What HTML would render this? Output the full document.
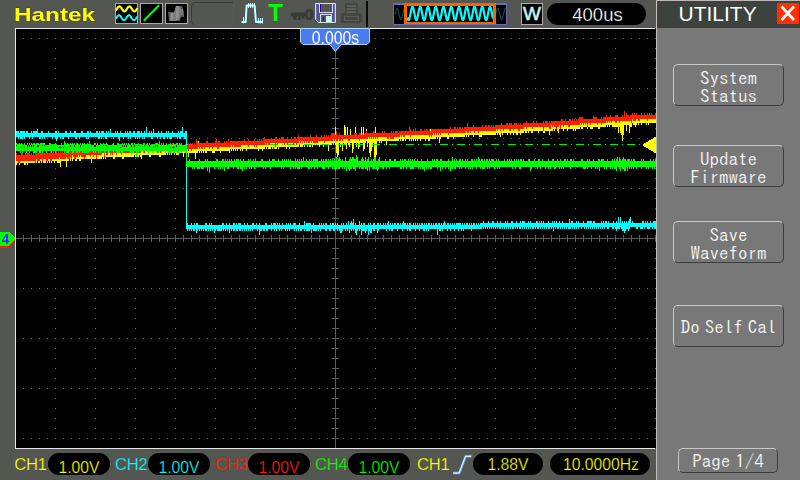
<!DOCTYPE html>
<html><head><meta charset="utf-8"><title>Hantek UTILITY</title>
<style>
html,body{margin:0;padding:0;}
body{width:800px;height:480px;overflow:hidden;background:#545652;position:relative;font-family:"Liberation Sans",sans-serif;}
.abs{position:absolute;white-space:nowrap;line-height:1;}
#g{position:absolute;left:0;top:0;}
.pill{position:absolute;background:#000;border-radius:11px;height:22px;}
.lbl{position:absolute;font-size:16.6px;letter-spacing:-0.2px;-webkit-text-stroke:0.25px #545652;line-height:22px;height:22px;white-space:nowrap;}
.val{position:absolute;font-size:15.7px;-webkit-text-stroke:0.25px #000;line-height:22px;height:22px;white-space:nowrap;text-align:center;}
.y{color:#ffff00}.c{color:#00ffff}.r{color:#ff2000}.gn{color:#00ff00}
#panel{position:absolute;left:657px;top:0;width:143px;height:480px;background:#787878;}
#title{position:absolute;left:657px;top:0;width:143px;height:27.5px;background:#3e423e;border-top:1px solid #bcb8bc;box-sizing:border-box;}
.btn{position:absolute;left:673px;width:111px;box-sizing:border-box;border-radius:5px;border:1px solid;border-color:#c8c8c8 #3c3c3c #3c3c3c #c8c8c8;color:#fff;font-family:"IPAGothic","Liberation Mono",monospace;font-size:19px;word-spacing:-4.5px;-webkit-text-stroke:0.22px #787878;text-align:center;white-space:nowrap;}
</style></head><body>
<div id="panel"></div>
<div id="title"></div>
<svg id="g" width="800" height="480" viewBox="0 0 800 480" shape-rendering="crispEdges">
<rect x="16" y="29" width="640" height="419" fill="#000"/>
<path fill="#6a6a6a" d="M23 38h1v1h-1zM31 38h1v1h-1zM39 38h1v1h-1zM47 38h1v1h-1zM55 38h1v1h-1zM63 38h1v1h-1zM71 38h1v1h-1zM79 38h1v1h-1zM87 38h1v1h-1zM95 38h1v1h-1zM103 38h1v1h-1zM111 38h1v1h-1zM119 38h1v1h-1zM127 38h1v1h-1zM135 38h1v1h-1zM143 38h1v1h-1zM151 38h1v1h-1zM159 38h1v1h-1zM167 38h1v1h-1zM175 38h1v1h-1zM183 38h1v1h-1zM191 38h1v1h-1zM199 38h1v1h-1zM207 38h1v1h-1zM215 38h1v1h-1zM223 38h1v1h-1zM231 38h1v1h-1zM239 38h1v1h-1zM247 38h1v1h-1zM255 38h1v1h-1zM263 38h1v1h-1zM271 38h1v1h-1zM279 38h1v1h-1zM287 38h1v1h-1zM295 38h1v1h-1zM303 38h1v1h-1zM311 38h1v1h-1zM319 38h1v1h-1zM327 38h1v1h-1zM335 38h1v1h-1zM343 38h1v1h-1zM351 38h1v1h-1zM359 38h1v1h-1zM367 38h1v1h-1zM375 38h1v1h-1zM383 38h1v1h-1zM391 38h1v1h-1zM399 38h1v1h-1zM407 38h1v1h-1zM415 38h1v1h-1zM423 38h1v1h-1zM431 38h1v1h-1zM439 38h1v1h-1zM447 38h1v1h-1zM455 38h1v1h-1zM463 38h1v1h-1zM471 38h1v1h-1zM479 38h1v1h-1zM487 38h1v1h-1zM495 38h1v1h-1zM503 38h1v1h-1zM511 38h1v1h-1zM519 38h1v1h-1zM527 38h1v1h-1zM535 38h1v1h-1zM543 38h1v1h-1zM551 38h1v1h-1zM559 38h1v1h-1zM567 38h1v1h-1zM575 38h1v1h-1zM583 38h1v1h-1zM591 38h1v1h-1zM599 38h1v1h-1zM607 38h1v1h-1zM615 38h1v1h-1zM623 38h1v1h-1zM631 38h1v1h-1zM639 38h1v1h-1zM647 38h1v1h-1zM655 38h1v1h-1zM23 88h1v1h-1zM31 88h1v1h-1zM39 88h1v1h-1zM47 88h1v1h-1zM55 88h1v1h-1zM63 88h1v1h-1zM71 88h1v1h-1zM79 88h1v1h-1zM87 88h1v1h-1zM95 88h1v1h-1zM103 88h1v1h-1zM111 88h1v1h-1zM119 88h1v1h-1zM127 88h1v1h-1zM135 88h1v1h-1zM143 88h1v1h-1zM151 88h1v1h-1zM159 88h1v1h-1zM167 88h1v1h-1zM175 88h1v1h-1zM183 88h1v1h-1zM191 88h1v1h-1zM199 88h1v1h-1zM207 88h1v1h-1zM215 88h1v1h-1zM223 88h1v1h-1zM231 88h1v1h-1zM239 88h1v1h-1zM247 88h1v1h-1zM255 88h1v1h-1zM263 88h1v1h-1zM271 88h1v1h-1zM279 88h1v1h-1zM287 88h1v1h-1zM295 88h1v1h-1zM303 88h1v1h-1zM311 88h1v1h-1zM319 88h1v1h-1zM327 88h1v1h-1zM335 88h1v1h-1zM343 88h1v1h-1zM351 88h1v1h-1zM359 88h1v1h-1zM367 88h1v1h-1zM375 88h1v1h-1zM383 88h1v1h-1zM391 88h1v1h-1zM399 88h1v1h-1zM407 88h1v1h-1zM415 88h1v1h-1zM423 88h1v1h-1zM431 88h1v1h-1zM439 88h1v1h-1zM447 88h1v1h-1zM455 88h1v1h-1zM463 88h1v1h-1zM471 88h1v1h-1zM479 88h1v1h-1zM487 88h1v1h-1zM495 88h1v1h-1zM503 88h1v1h-1zM511 88h1v1h-1zM519 88h1v1h-1zM527 88h1v1h-1zM535 88h1v1h-1zM543 88h1v1h-1zM551 88h1v1h-1zM559 88h1v1h-1zM567 88h1v1h-1zM575 88h1v1h-1zM583 88h1v1h-1zM591 88h1v1h-1zM599 88h1v1h-1zM607 88h1v1h-1zM615 88h1v1h-1zM623 88h1v1h-1zM631 88h1v1h-1zM639 88h1v1h-1zM647 88h1v1h-1zM655 88h1v1h-1zM23 138h1v1h-1zM31 138h1v1h-1zM39 138h1v1h-1zM47 138h1v1h-1zM55 138h1v1h-1zM63 138h1v1h-1zM71 138h1v1h-1zM79 138h1v1h-1zM87 138h1v1h-1zM95 138h1v1h-1zM103 138h1v1h-1zM111 138h1v1h-1zM119 138h1v1h-1zM127 138h1v1h-1zM135 138h1v1h-1zM143 138h1v1h-1zM151 138h1v1h-1zM159 138h1v1h-1zM167 138h1v1h-1zM175 138h1v1h-1zM183 138h1v1h-1zM191 138h1v1h-1zM199 138h1v1h-1zM207 138h1v1h-1zM215 138h1v1h-1zM223 138h1v1h-1zM231 138h1v1h-1zM239 138h1v1h-1zM247 138h1v1h-1zM255 138h1v1h-1zM263 138h1v1h-1zM271 138h1v1h-1zM279 138h1v1h-1zM287 138h1v1h-1zM295 138h1v1h-1zM303 138h1v1h-1zM311 138h1v1h-1zM319 138h1v1h-1zM327 138h1v1h-1zM335 138h1v1h-1zM343 138h1v1h-1zM351 138h1v1h-1zM359 138h1v1h-1zM367 138h1v1h-1zM375 138h1v1h-1zM383 138h1v1h-1zM391 138h1v1h-1zM399 138h1v1h-1zM407 138h1v1h-1zM415 138h1v1h-1zM423 138h1v1h-1zM431 138h1v1h-1zM439 138h1v1h-1zM447 138h1v1h-1zM455 138h1v1h-1zM463 138h1v1h-1zM471 138h1v1h-1zM479 138h1v1h-1zM487 138h1v1h-1zM495 138h1v1h-1zM503 138h1v1h-1zM511 138h1v1h-1zM519 138h1v1h-1zM527 138h1v1h-1zM535 138h1v1h-1zM543 138h1v1h-1zM551 138h1v1h-1zM559 138h1v1h-1zM567 138h1v1h-1zM575 138h1v1h-1zM583 138h1v1h-1zM591 138h1v1h-1zM599 138h1v1h-1zM607 138h1v1h-1zM615 138h1v1h-1zM623 138h1v1h-1zM631 138h1v1h-1zM639 138h1v1h-1zM647 138h1v1h-1zM655 138h1v1h-1zM23 188h1v1h-1zM31 188h1v1h-1zM39 188h1v1h-1zM47 188h1v1h-1zM55 188h1v1h-1zM63 188h1v1h-1zM71 188h1v1h-1zM79 188h1v1h-1zM87 188h1v1h-1zM95 188h1v1h-1zM103 188h1v1h-1zM111 188h1v1h-1zM119 188h1v1h-1zM127 188h1v1h-1zM135 188h1v1h-1zM143 188h1v1h-1zM151 188h1v1h-1zM159 188h1v1h-1zM167 188h1v1h-1zM175 188h1v1h-1zM183 188h1v1h-1zM191 188h1v1h-1zM199 188h1v1h-1zM207 188h1v1h-1zM215 188h1v1h-1zM223 188h1v1h-1zM231 188h1v1h-1zM239 188h1v1h-1zM247 188h1v1h-1zM255 188h1v1h-1zM263 188h1v1h-1zM271 188h1v1h-1zM279 188h1v1h-1zM287 188h1v1h-1zM295 188h1v1h-1zM303 188h1v1h-1zM311 188h1v1h-1zM319 188h1v1h-1zM327 188h1v1h-1zM335 188h1v1h-1zM343 188h1v1h-1zM351 188h1v1h-1zM359 188h1v1h-1zM367 188h1v1h-1zM375 188h1v1h-1zM383 188h1v1h-1zM391 188h1v1h-1zM399 188h1v1h-1zM407 188h1v1h-1zM415 188h1v1h-1zM423 188h1v1h-1zM431 188h1v1h-1zM439 188h1v1h-1zM447 188h1v1h-1zM455 188h1v1h-1zM463 188h1v1h-1zM471 188h1v1h-1zM479 188h1v1h-1zM487 188h1v1h-1zM495 188h1v1h-1zM503 188h1v1h-1zM511 188h1v1h-1zM519 188h1v1h-1zM527 188h1v1h-1zM535 188h1v1h-1zM543 188h1v1h-1zM551 188h1v1h-1zM559 188h1v1h-1zM567 188h1v1h-1zM575 188h1v1h-1zM583 188h1v1h-1zM591 188h1v1h-1zM599 188h1v1h-1zM607 188h1v1h-1zM615 188h1v1h-1zM623 188h1v1h-1zM631 188h1v1h-1zM639 188h1v1h-1zM647 188h1v1h-1zM655 188h1v1h-1zM23 288h1v1h-1zM31 288h1v1h-1zM39 288h1v1h-1zM47 288h1v1h-1zM55 288h1v1h-1zM63 288h1v1h-1zM71 288h1v1h-1zM79 288h1v1h-1zM87 288h1v1h-1zM95 288h1v1h-1zM103 288h1v1h-1zM111 288h1v1h-1zM119 288h1v1h-1zM127 288h1v1h-1zM135 288h1v1h-1zM143 288h1v1h-1zM151 288h1v1h-1zM159 288h1v1h-1zM167 288h1v1h-1zM175 288h1v1h-1zM183 288h1v1h-1zM191 288h1v1h-1zM199 288h1v1h-1zM207 288h1v1h-1zM215 288h1v1h-1zM223 288h1v1h-1zM231 288h1v1h-1zM239 288h1v1h-1zM247 288h1v1h-1zM255 288h1v1h-1zM263 288h1v1h-1zM271 288h1v1h-1zM279 288h1v1h-1zM287 288h1v1h-1zM295 288h1v1h-1zM303 288h1v1h-1zM311 288h1v1h-1zM319 288h1v1h-1zM327 288h1v1h-1zM335 288h1v1h-1zM343 288h1v1h-1zM351 288h1v1h-1zM359 288h1v1h-1zM367 288h1v1h-1zM375 288h1v1h-1zM383 288h1v1h-1zM391 288h1v1h-1zM399 288h1v1h-1zM407 288h1v1h-1zM415 288h1v1h-1zM423 288h1v1h-1zM431 288h1v1h-1zM439 288h1v1h-1zM447 288h1v1h-1zM455 288h1v1h-1zM463 288h1v1h-1zM471 288h1v1h-1zM479 288h1v1h-1zM487 288h1v1h-1zM495 288h1v1h-1zM503 288h1v1h-1zM511 288h1v1h-1zM519 288h1v1h-1zM527 288h1v1h-1zM535 288h1v1h-1zM543 288h1v1h-1zM551 288h1v1h-1zM559 288h1v1h-1zM567 288h1v1h-1zM575 288h1v1h-1zM583 288h1v1h-1zM591 288h1v1h-1zM599 288h1v1h-1zM607 288h1v1h-1zM615 288h1v1h-1zM623 288h1v1h-1zM631 288h1v1h-1zM639 288h1v1h-1zM647 288h1v1h-1zM655 288h1v1h-1zM23 338h1v1h-1zM31 338h1v1h-1zM39 338h1v1h-1zM47 338h1v1h-1zM55 338h1v1h-1zM63 338h1v1h-1zM71 338h1v1h-1zM79 338h1v1h-1zM87 338h1v1h-1zM95 338h1v1h-1zM103 338h1v1h-1zM111 338h1v1h-1zM119 338h1v1h-1zM127 338h1v1h-1zM135 338h1v1h-1zM143 338h1v1h-1zM151 338h1v1h-1zM159 338h1v1h-1zM167 338h1v1h-1zM175 338h1v1h-1zM183 338h1v1h-1zM191 338h1v1h-1zM199 338h1v1h-1zM207 338h1v1h-1zM215 338h1v1h-1zM223 338h1v1h-1zM231 338h1v1h-1zM239 338h1v1h-1zM247 338h1v1h-1zM255 338h1v1h-1zM263 338h1v1h-1zM271 338h1v1h-1zM279 338h1v1h-1zM287 338h1v1h-1zM295 338h1v1h-1zM303 338h1v1h-1zM311 338h1v1h-1zM319 338h1v1h-1zM327 338h1v1h-1zM335 338h1v1h-1zM343 338h1v1h-1zM351 338h1v1h-1zM359 338h1v1h-1zM367 338h1v1h-1zM375 338h1v1h-1zM383 338h1v1h-1zM391 338h1v1h-1zM399 338h1v1h-1zM407 338h1v1h-1zM415 338h1v1h-1zM423 338h1v1h-1zM431 338h1v1h-1zM439 338h1v1h-1zM447 338h1v1h-1zM455 338h1v1h-1zM463 338h1v1h-1zM471 338h1v1h-1zM479 338h1v1h-1zM487 338h1v1h-1zM495 338h1v1h-1zM503 338h1v1h-1zM511 338h1v1h-1zM519 338h1v1h-1zM527 338h1v1h-1zM535 338h1v1h-1zM543 338h1v1h-1zM551 338h1v1h-1zM559 338h1v1h-1zM567 338h1v1h-1zM575 338h1v1h-1zM583 338h1v1h-1zM591 338h1v1h-1zM599 338h1v1h-1zM607 338h1v1h-1zM615 338h1v1h-1zM623 338h1v1h-1zM631 338h1v1h-1zM639 338h1v1h-1zM647 338h1v1h-1zM655 338h1v1h-1zM23 388h1v1h-1zM31 388h1v1h-1zM39 388h1v1h-1zM47 388h1v1h-1zM55 388h1v1h-1zM63 388h1v1h-1zM71 388h1v1h-1zM79 388h1v1h-1zM87 388h1v1h-1zM95 388h1v1h-1zM103 388h1v1h-1zM111 388h1v1h-1zM119 388h1v1h-1zM127 388h1v1h-1zM135 388h1v1h-1zM143 388h1v1h-1zM151 388h1v1h-1zM159 388h1v1h-1zM167 388h1v1h-1zM175 388h1v1h-1zM183 388h1v1h-1zM191 388h1v1h-1zM199 388h1v1h-1zM207 388h1v1h-1zM215 388h1v1h-1zM223 388h1v1h-1zM231 388h1v1h-1zM239 388h1v1h-1zM247 388h1v1h-1zM255 388h1v1h-1zM263 388h1v1h-1zM271 388h1v1h-1zM279 388h1v1h-1zM287 388h1v1h-1zM295 388h1v1h-1zM303 388h1v1h-1zM311 388h1v1h-1zM319 388h1v1h-1zM327 388h1v1h-1zM335 388h1v1h-1zM343 388h1v1h-1zM351 388h1v1h-1zM359 388h1v1h-1zM367 388h1v1h-1zM375 388h1v1h-1zM383 388h1v1h-1zM391 388h1v1h-1zM399 388h1v1h-1zM407 388h1v1h-1zM415 388h1v1h-1zM423 388h1v1h-1zM431 388h1v1h-1zM439 388h1v1h-1zM447 388h1v1h-1zM455 388h1v1h-1zM463 388h1v1h-1zM471 388h1v1h-1zM479 388h1v1h-1zM487 388h1v1h-1zM495 388h1v1h-1zM503 388h1v1h-1zM511 388h1v1h-1zM519 388h1v1h-1zM527 388h1v1h-1zM535 388h1v1h-1zM543 388h1v1h-1zM551 388h1v1h-1zM559 388h1v1h-1zM567 388h1v1h-1zM575 388h1v1h-1zM583 388h1v1h-1zM591 388h1v1h-1zM599 388h1v1h-1zM607 388h1v1h-1zM615 388h1v1h-1zM623 388h1v1h-1zM631 388h1v1h-1zM639 388h1v1h-1zM647 388h1v1h-1zM655 388h1v1h-1zM23 438h1v1h-1zM31 438h1v1h-1zM39 438h1v1h-1zM47 438h1v1h-1zM55 438h1v1h-1zM63 438h1v1h-1zM71 438h1v1h-1zM79 438h1v1h-1zM87 438h1v1h-1zM95 438h1v1h-1zM103 438h1v1h-1zM111 438h1v1h-1zM119 438h1v1h-1zM127 438h1v1h-1zM135 438h1v1h-1zM143 438h1v1h-1zM151 438h1v1h-1zM159 438h1v1h-1zM167 438h1v1h-1zM175 438h1v1h-1zM183 438h1v1h-1zM191 438h1v1h-1zM199 438h1v1h-1zM207 438h1v1h-1zM215 438h1v1h-1zM223 438h1v1h-1zM231 438h1v1h-1zM239 438h1v1h-1zM247 438h1v1h-1zM255 438h1v1h-1zM263 438h1v1h-1zM271 438h1v1h-1zM279 438h1v1h-1zM287 438h1v1h-1zM295 438h1v1h-1zM303 438h1v1h-1zM311 438h1v1h-1zM319 438h1v1h-1zM327 438h1v1h-1zM335 438h1v1h-1zM343 438h1v1h-1zM351 438h1v1h-1zM359 438h1v1h-1zM367 438h1v1h-1zM375 438h1v1h-1zM383 438h1v1h-1zM391 438h1v1h-1zM399 438h1v1h-1zM407 438h1v1h-1zM415 438h1v1h-1zM423 438h1v1h-1zM431 438h1v1h-1zM439 438h1v1h-1zM447 438h1v1h-1zM455 438h1v1h-1zM463 438h1v1h-1zM471 438h1v1h-1zM479 438h1v1h-1zM487 438h1v1h-1zM495 438h1v1h-1zM503 438h1v1h-1zM511 438h1v1h-1zM519 438h1v1h-1zM527 438h1v1h-1zM535 438h1v1h-1zM543 438h1v1h-1zM551 438h1v1h-1zM559 438h1v1h-1zM567 438h1v1h-1zM575 438h1v1h-1zM583 438h1v1h-1zM591 438h1v1h-1zM599 438h1v1h-1zM607 438h1v1h-1zM615 438h1v1h-1zM623 438h1v1h-1zM631 438h1v1h-1zM639 438h1v1h-1zM647 438h1v1h-1zM655 438h1v1h-1zM55 48h1v1h-1zM55 58h1v1h-1zM55 68h1v1h-1zM55 78h1v1h-1zM55 98h1v1h-1zM55 108h1v1h-1zM55 118h1v1h-1zM55 128h1v1h-1zM55 148h1v1h-1zM55 158h1v1h-1zM55 168h1v1h-1zM55 178h1v1h-1zM55 198h1v1h-1zM55 208h1v1h-1zM55 218h1v1h-1zM55 228h1v1h-1zM55 238h1v1h-1zM55 248h1v1h-1zM55 258h1v1h-1zM55 268h1v1h-1zM55 278h1v1h-1zM55 298h1v1h-1zM55 308h1v1h-1zM55 318h1v1h-1zM55 328h1v1h-1zM55 348h1v1h-1zM55 358h1v1h-1zM55 368h1v1h-1zM55 378h1v1h-1zM55 398h1v1h-1zM55 408h1v1h-1zM55 418h1v1h-1zM55 428h1v1h-1zM95 48h1v1h-1zM95 58h1v1h-1zM95 68h1v1h-1zM95 78h1v1h-1zM95 98h1v1h-1zM95 108h1v1h-1zM95 118h1v1h-1zM95 128h1v1h-1zM95 148h1v1h-1zM95 158h1v1h-1zM95 168h1v1h-1zM95 178h1v1h-1zM95 198h1v1h-1zM95 208h1v1h-1zM95 218h1v1h-1zM95 228h1v1h-1zM95 238h1v1h-1zM95 248h1v1h-1zM95 258h1v1h-1zM95 268h1v1h-1zM95 278h1v1h-1zM95 298h1v1h-1zM95 308h1v1h-1zM95 318h1v1h-1zM95 328h1v1h-1zM95 348h1v1h-1zM95 358h1v1h-1zM95 368h1v1h-1zM95 378h1v1h-1zM95 398h1v1h-1zM95 408h1v1h-1zM95 418h1v1h-1zM95 428h1v1h-1zM135 48h1v1h-1zM135 58h1v1h-1zM135 68h1v1h-1zM135 78h1v1h-1zM135 98h1v1h-1zM135 108h1v1h-1zM135 118h1v1h-1zM135 128h1v1h-1zM135 148h1v1h-1zM135 158h1v1h-1zM135 168h1v1h-1zM135 178h1v1h-1zM135 198h1v1h-1zM135 208h1v1h-1zM135 218h1v1h-1zM135 228h1v1h-1zM135 238h1v1h-1zM135 248h1v1h-1zM135 258h1v1h-1zM135 268h1v1h-1zM135 278h1v1h-1zM135 298h1v1h-1zM135 308h1v1h-1zM135 318h1v1h-1zM135 328h1v1h-1zM135 348h1v1h-1zM135 358h1v1h-1zM135 368h1v1h-1zM135 378h1v1h-1zM135 398h1v1h-1zM135 408h1v1h-1zM135 418h1v1h-1zM135 428h1v1h-1zM175 48h1v1h-1zM175 58h1v1h-1zM175 68h1v1h-1zM175 78h1v1h-1zM175 98h1v1h-1zM175 108h1v1h-1zM175 118h1v1h-1zM175 128h1v1h-1zM175 148h1v1h-1zM175 158h1v1h-1zM175 168h1v1h-1zM175 178h1v1h-1zM175 198h1v1h-1zM175 208h1v1h-1zM175 218h1v1h-1zM175 228h1v1h-1zM175 238h1v1h-1zM175 248h1v1h-1zM175 258h1v1h-1zM175 268h1v1h-1zM175 278h1v1h-1zM175 298h1v1h-1zM175 308h1v1h-1zM175 318h1v1h-1zM175 328h1v1h-1zM175 348h1v1h-1zM175 358h1v1h-1zM175 368h1v1h-1zM175 378h1v1h-1zM175 398h1v1h-1zM175 408h1v1h-1zM175 418h1v1h-1zM175 428h1v1h-1zM215 48h1v1h-1zM215 58h1v1h-1zM215 68h1v1h-1zM215 78h1v1h-1zM215 98h1v1h-1zM215 108h1v1h-1zM215 118h1v1h-1zM215 128h1v1h-1zM215 148h1v1h-1zM215 158h1v1h-1zM215 168h1v1h-1zM215 178h1v1h-1zM215 198h1v1h-1zM215 208h1v1h-1zM215 218h1v1h-1zM215 228h1v1h-1zM215 238h1v1h-1zM215 248h1v1h-1zM215 258h1v1h-1zM215 268h1v1h-1zM215 278h1v1h-1zM215 298h1v1h-1zM215 308h1v1h-1zM215 318h1v1h-1zM215 328h1v1h-1zM215 348h1v1h-1zM215 358h1v1h-1zM215 368h1v1h-1zM215 378h1v1h-1zM215 398h1v1h-1zM215 408h1v1h-1zM215 418h1v1h-1zM215 428h1v1h-1zM255 48h1v1h-1zM255 58h1v1h-1zM255 68h1v1h-1zM255 78h1v1h-1zM255 98h1v1h-1zM255 108h1v1h-1zM255 118h1v1h-1zM255 128h1v1h-1zM255 148h1v1h-1zM255 158h1v1h-1zM255 168h1v1h-1zM255 178h1v1h-1zM255 198h1v1h-1zM255 208h1v1h-1zM255 218h1v1h-1zM255 228h1v1h-1zM255 238h1v1h-1zM255 248h1v1h-1zM255 258h1v1h-1zM255 268h1v1h-1zM255 278h1v1h-1zM255 298h1v1h-1zM255 308h1v1h-1zM255 318h1v1h-1zM255 328h1v1h-1zM255 348h1v1h-1zM255 358h1v1h-1zM255 368h1v1h-1zM255 378h1v1h-1zM255 398h1v1h-1zM255 408h1v1h-1zM255 418h1v1h-1zM255 428h1v1h-1zM295 48h1v1h-1zM295 58h1v1h-1zM295 68h1v1h-1zM295 78h1v1h-1zM295 98h1v1h-1zM295 108h1v1h-1zM295 118h1v1h-1zM295 128h1v1h-1zM295 148h1v1h-1zM295 158h1v1h-1zM295 168h1v1h-1zM295 178h1v1h-1zM295 198h1v1h-1zM295 208h1v1h-1zM295 218h1v1h-1zM295 228h1v1h-1zM295 238h1v1h-1zM295 248h1v1h-1zM295 258h1v1h-1zM295 268h1v1h-1zM295 278h1v1h-1zM295 298h1v1h-1zM295 308h1v1h-1zM295 318h1v1h-1zM295 328h1v1h-1zM295 348h1v1h-1zM295 358h1v1h-1zM295 368h1v1h-1zM295 378h1v1h-1zM295 398h1v1h-1zM295 408h1v1h-1zM295 418h1v1h-1zM295 428h1v1h-1zM375 48h1v1h-1zM375 58h1v1h-1zM375 68h1v1h-1zM375 78h1v1h-1zM375 98h1v1h-1zM375 108h1v1h-1zM375 118h1v1h-1zM375 128h1v1h-1zM375 148h1v1h-1zM375 158h1v1h-1zM375 168h1v1h-1zM375 178h1v1h-1zM375 198h1v1h-1zM375 208h1v1h-1zM375 218h1v1h-1zM375 228h1v1h-1zM375 238h1v1h-1zM375 248h1v1h-1zM375 258h1v1h-1zM375 268h1v1h-1zM375 278h1v1h-1zM375 298h1v1h-1zM375 308h1v1h-1zM375 318h1v1h-1zM375 328h1v1h-1zM375 348h1v1h-1zM375 358h1v1h-1zM375 368h1v1h-1zM375 378h1v1h-1zM375 398h1v1h-1zM375 408h1v1h-1zM375 418h1v1h-1zM375 428h1v1h-1zM415 48h1v1h-1zM415 58h1v1h-1zM415 68h1v1h-1zM415 78h1v1h-1zM415 98h1v1h-1zM415 108h1v1h-1zM415 118h1v1h-1zM415 128h1v1h-1zM415 148h1v1h-1zM415 158h1v1h-1zM415 168h1v1h-1zM415 178h1v1h-1zM415 198h1v1h-1zM415 208h1v1h-1zM415 218h1v1h-1zM415 228h1v1h-1zM415 238h1v1h-1zM415 248h1v1h-1zM415 258h1v1h-1zM415 268h1v1h-1zM415 278h1v1h-1zM415 298h1v1h-1zM415 308h1v1h-1zM415 318h1v1h-1zM415 328h1v1h-1zM415 348h1v1h-1zM415 358h1v1h-1zM415 368h1v1h-1zM415 378h1v1h-1zM415 398h1v1h-1zM415 408h1v1h-1zM415 418h1v1h-1zM415 428h1v1h-1zM455 48h1v1h-1zM455 58h1v1h-1zM455 68h1v1h-1zM455 78h1v1h-1zM455 98h1v1h-1zM455 108h1v1h-1zM455 118h1v1h-1zM455 128h1v1h-1zM455 148h1v1h-1zM455 158h1v1h-1zM455 168h1v1h-1zM455 178h1v1h-1zM455 198h1v1h-1zM455 208h1v1h-1zM455 218h1v1h-1zM455 228h1v1h-1zM455 238h1v1h-1zM455 248h1v1h-1zM455 258h1v1h-1zM455 268h1v1h-1zM455 278h1v1h-1zM455 298h1v1h-1zM455 308h1v1h-1zM455 318h1v1h-1zM455 328h1v1h-1zM455 348h1v1h-1zM455 358h1v1h-1zM455 368h1v1h-1zM455 378h1v1h-1zM455 398h1v1h-1zM455 408h1v1h-1zM455 418h1v1h-1zM455 428h1v1h-1zM495 48h1v1h-1zM495 58h1v1h-1zM495 68h1v1h-1zM495 78h1v1h-1zM495 98h1v1h-1zM495 108h1v1h-1zM495 118h1v1h-1zM495 128h1v1h-1zM495 148h1v1h-1zM495 158h1v1h-1zM495 168h1v1h-1zM495 178h1v1h-1zM495 198h1v1h-1zM495 208h1v1h-1zM495 218h1v1h-1zM495 228h1v1h-1zM495 238h1v1h-1zM495 248h1v1h-1zM495 258h1v1h-1zM495 268h1v1h-1zM495 278h1v1h-1zM495 298h1v1h-1zM495 308h1v1h-1zM495 318h1v1h-1zM495 328h1v1h-1zM495 348h1v1h-1zM495 358h1v1h-1zM495 368h1v1h-1zM495 378h1v1h-1zM495 398h1v1h-1zM495 408h1v1h-1zM495 418h1v1h-1zM495 428h1v1h-1zM535 48h1v1h-1zM535 58h1v1h-1zM535 68h1v1h-1zM535 78h1v1h-1zM535 98h1v1h-1zM535 108h1v1h-1zM535 118h1v1h-1zM535 128h1v1h-1zM535 148h1v1h-1zM535 158h1v1h-1zM535 168h1v1h-1zM535 178h1v1h-1zM535 198h1v1h-1zM535 208h1v1h-1zM535 218h1v1h-1zM535 228h1v1h-1zM535 238h1v1h-1zM535 248h1v1h-1zM535 258h1v1h-1zM535 268h1v1h-1zM535 278h1v1h-1zM535 298h1v1h-1zM535 308h1v1h-1zM535 318h1v1h-1zM535 328h1v1h-1zM535 348h1v1h-1zM535 358h1v1h-1zM535 368h1v1h-1zM535 378h1v1h-1zM535 398h1v1h-1zM535 408h1v1h-1zM535 418h1v1h-1zM535 428h1v1h-1zM575 48h1v1h-1zM575 58h1v1h-1zM575 68h1v1h-1zM575 78h1v1h-1zM575 98h1v1h-1zM575 108h1v1h-1zM575 118h1v1h-1zM575 128h1v1h-1zM575 148h1v1h-1zM575 158h1v1h-1zM575 168h1v1h-1zM575 178h1v1h-1zM575 198h1v1h-1zM575 208h1v1h-1zM575 218h1v1h-1zM575 228h1v1h-1zM575 238h1v1h-1zM575 248h1v1h-1zM575 258h1v1h-1zM575 268h1v1h-1zM575 278h1v1h-1zM575 298h1v1h-1zM575 308h1v1h-1zM575 318h1v1h-1zM575 328h1v1h-1zM575 348h1v1h-1zM575 358h1v1h-1zM575 368h1v1h-1zM575 378h1v1h-1zM575 398h1v1h-1zM575 408h1v1h-1zM575 418h1v1h-1zM575 428h1v1h-1zM615 48h1v1h-1zM615 58h1v1h-1zM615 68h1v1h-1zM615 78h1v1h-1zM615 98h1v1h-1zM615 108h1v1h-1zM615 118h1v1h-1zM615 128h1v1h-1zM615 148h1v1h-1zM615 158h1v1h-1zM615 168h1v1h-1zM615 178h1v1h-1zM615 198h1v1h-1zM615 208h1v1h-1zM615 218h1v1h-1zM615 228h1v1h-1zM615 238h1v1h-1zM615 248h1v1h-1zM615 258h1v1h-1zM615 268h1v1h-1zM615 278h1v1h-1zM615 298h1v1h-1zM615 308h1v1h-1zM615 318h1v1h-1zM615 328h1v1h-1zM615 348h1v1h-1zM615 358h1v1h-1zM615 368h1v1h-1zM615 378h1v1h-1zM615 398h1v1h-1zM615 408h1v1h-1zM615 418h1v1h-1zM615 428h1v1h-1zM655 48h1v1h-1zM655 58h1v1h-1zM655 68h1v1h-1zM655 78h1v1h-1zM655 98h1v1h-1zM655 108h1v1h-1zM655 118h1v1h-1zM655 128h1v1h-1zM655 148h1v1h-1zM655 158h1v1h-1zM655 168h1v1h-1zM655 178h1v1h-1zM655 198h1v1h-1zM655 208h1v1h-1zM655 218h1v1h-1zM655 228h1v1h-1zM655 238h1v1h-1zM655 248h1v1h-1zM655 258h1v1h-1zM655 268h1v1h-1zM655 278h1v1h-1zM655 298h1v1h-1zM655 308h1v1h-1zM655 318h1v1h-1zM655 328h1v1h-1zM655 348h1v1h-1zM655 358h1v1h-1zM655 368h1v1h-1zM655 378h1v1h-1zM655 398h1v1h-1zM655 408h1v1h-1zM655 418h1v1h-1zM655 428h1v1h-1z"/>
<path fill="#5c5c5c" d="M16 238h640v1h-640zM23 235h1v7h-1zM31 235h1v7h-1zM39 235h1v7h-1zM47 235h1v7h-1zM55 235h1v7h-1zM63 235h1v7h-1zM71 235h1v7h-1zM79 235h1v7h-1zM87 235h1v7h-1zM95 235h1v7h-1zM103 235h1v7h-1zM111 235h1v7h-1zM119 235h1v7h-1zM127 235h1v7h-1zM135 235h1v7h-1zM143 235h1v7h-1zM151 235h1v7h-1zM159 235h1v7h-1zM167 235h1v7h-1zM175 235h1v7h-1zM183 235h1v7h-1zM191 235h1v7h-1zM199 235h1v7h-1zM207 235h1v7h-1zM215 235h1v7h-1zM223 235h1v7h-1zM231 235h1v7h-1zM239 235h1v7h-1zM247 235h1v7h-1zM255 235h1v7h-1zM263 235h1v7h-1zM271 235h1v7h-1zM279 235h1v7h-1zM287 235h1v7h-1zM295 235h1v7h-1zM303 235h1v7h-1zM311 235h1v7h-1zM319 235h1v7h-1zM327 235h1v7h-1zM335 235h1v7h-1zM343 235h1v7h-1zM351 235h1v7h-1zM359 235h1v7h-1zM367 235h1v7h-1zM375 235h1v7h-1zM383 235h1v7h-1zM391 235h1v7h-1zM399 235h1v7h-1zM407 235h1v7h-1zM415 235h1v7h-1zM423 235h1v7h-1zM431 235h1v7h-1zM439 235h1v7h-1zM447 235h1v7h-1zM455 235h1v7h-1zM463 235h1v7h-1zM471 235h1v7h-1zM479 235h1v7h-1zM487 235h1v7h-1zM495 235h1v7h-1zM503 235h1v7h-1zM511 235h1v7h-1zM519 235h1v7h-1zM527 235h1v7h-1zM535 235h1v7h-1zM543 235h1v7h-1zM551 235h1v7h-1zM559 235h1v7h-1zM567 235h1v7h-1zM575 235h1v7h-1zM583 235h1v7h-1zM591 235h1v7h-1zM599 235h1v7h-1zM607 235h1v7h-1zM615 235h1v7h-1zM623 235h1v7h-1zM631 235h1v7h-1zM639 235h1v7h-1zM647 235h1v7h-1zM655 235h1v7h-1zM335 29h1v419h-1zM332 38h7v1h-7zM332 48h7v1h-7zM332 58h7v1h-7zM332 68h7v1h-7zM332 78h7v1h-7zM332 88h7v1h-7zM332 98h7v1h-7zM332 108h7v1h-7zM332 118h7v1h-7zM332 128h7v1h-7zM332 138h7v1h-7zM332 148h7v1h-7zM332 158h7v1h-7zM332 168h7v1h-7zM332 178h7v1h-7zM332 188h7v1h-7zM332 198h7v1h-7zM332 208h7v1h-7zM332 218h7v1h-7zM332 228h7v1h-7zM332 238h7v1h-7zM332 248h7v1h-7zM332 258h7v1h-7zM332 268h7v1h-7zM332 278h7v1h-7zM332 288h7v1h-7zM332 298h7v1h-7zM332 308h7v1h-7zM332 318h7v1h-7zM332 328h7v1h-7zM332 338h7v1h-7zM332 348h7v1h-7zM332 358h7v1h-7zM332 368h7v1h-7zM332 378h7v1h-7zM332 388h7v1h-7zM332 398h7v1h-7zM332 408h7v1h-7zM332 418h7v1h-7zM332 428h7v1h-7zM332 438h7v1h-7z"/>
<path fill="#ffff00" d="M16 157h1v8h-1zM17 155h2v8h-2zM19 157h1v8h-1zM20 157h1v6h-1zM21 155h1v8h-1zM22 157h1v6h-1zM23 155h1v8h-1zM24 155h1v10h-1zM25 157h1v8h-1zM26 157h1v6h-1zM27 155h1v10h-1zM28 157h1v6h-1zM29 155h1v8h-1zM30 157h1v6h-1zM31 155h1v8h-1zM32 157h1v6h-1zM33 155h2v8h-2zM35 157h1v6h-1zM36 155h1v8h-1zM37 155h1v6h-1zM38 155h2v8h-2zM40 155h1v6h-1zM41 155h1v8h-1zM42 153h1v8h-1zM43 153h2v10h-2zM45 155h1v8h-1zM46 155h1v6h-1zM47 155h1v8h-1zM48 155h1v6h-1zM49 153h1v10h-1zM50 153h1v8h-1zM51 153h1v10h-1zM52 155h2v6h-2zM54 155h1v8h-1zM55 155h2v6h-2zM57 155h1v8h-1zM58 153h2v10h-2zM60 153h1v14h-1zM61 155h1v6h-1zM62 153h2v8h-2zM64 155h1v6h-1zM65 153h1v8h-1zM66 155h1v12h-1zM67 155h1v6h-1zM68 153h1v8h-1zM69 153h1v6h-1zM70 153h1v8h-1zM71 153h1v6h-1zM72 153h1v8h-1zM73 153h2v6h-2zM75 153h1v8h-1zM76 151h1v10h-1zM77 153h2v6h-2zM79 153h2v8h-2zM81 153h7v6h-7zM88 151h1v8h-1zM89 153h2v6h-2zM91 153h1v10h-1zM92 153h2v6h-2zM94 151h3v8h-3zM97 153h1v6h-1zM98 151h1v8h-1zM99 153h1v6h-1zM100 151h2v8h-2zM102 151h1v6h-1zM103 151h1v8h-1zM104 151h1v6h-1zM105 151h1v8h-1zM106 151h7v6h-7zM113 149h2v10h-2zM115 151h1v6h-1zM116 149h3v8h-3zM119 151h1v6h-1zM120 149h1v8h-1zM121 151h1v6h-1zM122 151h1v8h-1zM123 149h1v10h-1zM124 151h2v6h-2zM126 149h1v8h-1zM127 151h1v6h-1zM128 149h2v8h-2zM130 151h1v6h-1zM131 149h1v8h-1zM132 147h1v10h-1zM133 149h1v8h-1zM134 147h1v8h-1zM135 149h3v8h-3zM138 147h1v10h-1zM139 149h1v6h-1zM140 149h1v8h-1zM141 147h1v12h-1zM142 149h7v6h-7zM149 147h2v10h-2zM151 149h1v6h-1zM152 147h1v8h-1zM153 149h1v6h-1zM154 147h1v8h-1zM155 149h1v6h-1zM156 145h1v10h-1zM157 149h1v6h-1zM158 145h1v10h-1zM159 147h2v10h-2zM161 147h1v8h-1zM162 149h1v6h-1zM163 147h3v8h-3zM166 147h1v6h-1zM167 147h1v8h-1zM168 147h1v6h-1zM169 147h1v8h-1zM170 147h1v6h-1zM171 145h1v10h-1zM172 145h1v8h-1zM173 147h1v6h-1zM174 147h1v8h-1zM175 147h1v6h-1zM176 147h3v8h-3zM179 147h3v6h-3zM182 145h1v8h-1zM183 147h1v10h-1zM184 145h1v8h-1zM185 147h2v6h-2zM187 145h1v8h-1zM188 147h1v10h-1zM189 145h1v8h-1zM190 147h1v6h-1zM191 145h3v8h-3zM194 147h1v6h-1zM195 145h1v14h-1zM196 145h2v8h-2zM198 141h1v10h-1zM199 145h1v8h-1zM200 145h1v6h-1zM201 145h1v8h-1zM202 145h1v6h-1zM203 145h1v8h-1zM204 143h1v8h-1zM205 145h2v8h-2zM207 145h5v6h-5zM212 145h3v8h-3zM215 145h1v6h-1zM216 143h1v8h-1zM217 145h2v6h-2zM219 143h1v8h-1zM220 145h1v8h-1zM221 143h1v8h-1zM222 145h1v6h-1zM223 143h3v8h-3zM226 145h1v6h-1zM227 143h1v8h-1zM228 145h1v6h-1zM229 143h1v10h-1zM230 143h1v6h-1zM231 141h1v10h-1zM232 143h1v6h-1zM233 143h1v8h-1zM234 143h1v6h-1zM235 143h1v8h-1zM236 143h1v6h-1zM237 143h1v8h-1zM238 143h2v6h-2zM240 141h1v10h-1zM241 143h1v6h-1zM242 143h1v8h-1zM243 143h3v6h-3zM246 143h1v8h-1zM247 143h2v6h-2zM249 141h1v8h-1zM250 143h3v6h-3zM253 141h3v8h-3zM256 143h1v6h-1zM257 141h1v8h-1zM258 141h1v10h-1zM259 143h1v6h-1zM260 141h1v8h-1zM261 143h1v6h-1zM262 141h1v10h-1zM263 143h1v6h-1zM264 141h1v8h-1zM265 141h1v6h-1zM266 141h1v8h-1zM267 141h1v6h-1zM268 139h1v10h-1zM269 141h2v8h-2zM271 141h1v6h-1zM272 139h1v10h-1zM273 139h1v8h-1zM274 141h2v8h-2zM276 137h1v12h-1zM277 141h1v6h-1zM278 141h1v8h-1zM279 141h6v6h-6zM285 139h1v8h-1zM286 139h1v10h-1zM287 141h2v6h-2zM289 139h1v10h-1zM290 141h1v6h-1zM291 139h1v8h-1zM292 141h1v6h-1zM293 139h1v8h-1zM294 141h1v6h-1zM295 139h2v8h-2zM297 141h1v6h-1zM298 139h1v8h-1zM299 139h1v6h-1zM300 139h3v8h-3zM303 139h1v6h-1zM304 139h1v8h-1zM305 139h2v6h-2zM307 139h1v8h-1zM308 139h1v6h-1zM309 139h2v8h-2zM311 139h1v6h-1zM312 137h1v10h-1zM313 139h1v6h-1zM314 137h2v8h-2zM316 139h3v6h-3zM319 137h1v10h-1zM320 139h2v6h-2zM322 137h1v8h-1zM323 139h1v8h-1zM324 137h3v8h-3zM327 139h1v6h-1zM328 137h1v14h-1zM329 137h1v8h-1zM330 139h1v6h-1zM331 137h1v8h-1zM332 137h1v6h-1zM333 137h1v8h-1zM334 137h1v6h-1zM335 127h1v18h-1zM336 135h1v18h-1zM337 135h1v22h-1zM338 137h1v18h-1zM339 137h1v6h-1zM340 137h1v10h-1zM341 137h1v8h-1zM342 137h1v14h-1zM343 137h1v6h-1zM344 125h1v20h-1zM345 127h1v18h-1zM346 137h1v12h-1zM347 127h1v16h-1zM348 137h1v8h-1zM349 137h1v10h-1zM350 129h1v14h-1zM351 137h1v6h-1zM352 137h1v16h-1zM353 135h1v14h-1zM354 135h1v8h-1zM355 127h1v16h-1zM356 137h1v10h-1zM357 137h1v6h-1zM358 135h1v14h-1zM359 135h1v12h-1zM360 137h1v6h-1zM361 127h1v16h-1zM362 137h1v6h-1zM363 127h1v24h-1zM364 135h1v14h-1zM365 135h1v8h-1zM366 129h1v12h-1zM367 135h1v12h-1zM368 135h1v8h-1zM369 135h1v18h-1zM370 135h1v22h-1zM371 133h1v18h-1zM372 135h1v12h-1zM373 135h1v8h-1zM374 131h1v26h-1zM375 127h1v32h-1zM376 135h1v20h-1zM377 135h1v6h-1zM378 133h1v8h-1zM379 133h1v10h-1zM380 135h1v6h-1zM381 135h1v8h-1zM382 135h2v6h-2zM384 133h1v8h-1zM385 135h1v6h-1zM386 133h1v12h-1zM387 135h1v6h-1zM388 133h1v8h-1zM389 135h1v6h-1zM390 133h1v8h-1zM391 135h1v6h-1zM392 133h1v8h-1zM393 135h1v6h-1zM394 133h2v8h-2zM396 135h1v6h-1zM397 133h1v8h-1zM398 135h1v6h-1zM399 133h1v6h-1zM400 133h1v8h-1zM401 133h1v6h-1zM402 133h2v8h-2zM404 133h1v6h-1zM405 133h1v8h-1zM406 133h3v6h-3zM409 133h1v8h-1zM410 131h1v8h-1zM411 131h1v10h-1zM412 133h1v6h-1zM413 133h1v8h-1zM414 133h1v6h-1zM415 133h1v8h-1zM416 133h1v6h-1zM417 131h1v10h-1zM418 133h2v6h-2zM420 131h1v10h-1zM421 131h2v8h-2zM423 133h2v6h-2zM425 131h1v10h-1zM426 133h1v6h-1zM427 131h1v8h-1zM428 133h1v8h-1zM429 131h1v10h-1zM430 129h1v10h-1zM431 131h1v8h-1zM432 129h1v10h-1zM433 131h3v8h-3zM436 129h1v8h-1zM437 131h1v8h-1zM438 131h1v6h-1zM439 129h1v14h-1zM440 129h1v10h-1zM441 131h6v6h-6zM447 131h2v8h-2zM449 131h1v6h-1zM450 129h1v8h-1zM451 131h2v6h-2zM453 131h1v8h-1zM454 129h1v8h-1zM455 131h1v6h-1zM456 129h2v8h-2zM458 131h1v6h-1zM459 129h2v8h-2zM461 131h1v6h-1zM462 129h3v8h-3zM465 129h1v6h-1zM466 129h1v8h-1zM467 129h1v6h-1zM468 129h1v8h-1zM469 129h4v6h-4zM473 129h1v8h-1zM474 129h5v6h-5zM479 129h3v8h-3zM482 129h1v6h-1zM483 127h1v8h-1zM484 129h2v6h-2zM486 127h1v8h-1zM487 129h1v6h-1zM488 127h1v8h-1zM489 129h1v6h-1zM490 127h2v8h-2zM492 129h1v6h-1zM493 127h2v8h-2zM495 125h1v10h-1zM496 127h1v6h-1zM497 127h1v8h-1zM498 125h1v8h-1zM499 127h1v8h-1zM500 127h1v10h-1zM501 127h1v6h-1zM502 125h1v10h-1zM503 127h4v6h-4zM507 127h1v8h-1zM508 127h2v6h-2zM510 125h1v10h-1zM511 125h1v8h-1zM512 127h1v6h-1zM513 127h1v8h-1zM514 127h2v6h-2zM516 127h1v8h-1zM517 125h1v10h-1zM518 127h2v6h-2zM520 125h1v10h-1zM521 127h1v6h-1zM522 125h2v8h-2zM524 125h1v6h-1zM525 125h2v8h-2zM527 125h1v6h-1zM528 125h1v8h-1zM529 125h1v6h-1zM530 123h1v8h-1zM531 125h1v8h-1zM532 123h1v10h-1zM533 125h5v6h-5zM538 123h1v10h-1zM539 125h2v6h-2zM541 123h1v8h-1zM542 125h1v6h-1zM543 125h1v8h-1zM544 123h1v10h-1zM545 125h1v6h-1zM546 123h1v8h-1zM547 125h1v6h-1zM548 123h1v8h-1zM549 123h1v12h-1zM550 123h3v8h-3zM553 123h1v6h-1zM554 121h1v10h-1zM555 123h2v6h-2zM557 123h1v8h-1zM558 123h1v10h-1zM559 123h4v6h-4zM563 123h1v8h-1zM564 123h3v6h-3zM567 123h1v8h-1zM568 123h4v6h-4zM572 121h1v8h-1zM573 121h1v10h-1zM574 123h1v6h-1zM575 121h1v10h-1zM576 123h1v6h-1zM577 121h1v8h-1zM578 123h1v6h-1zM579 119h1v10h-1zM580 119h1v8h-1zM581 119h1v10h-1zM582 121h1v8h-1zM583 121h1v6h-1zM584 119h2v8h-2zM586 121h1v6h-1zM587 121h1v8h-1zM588 121h2v6h-2zM590 119h1v10h-1zM591 121h2v8h-2zM593 115h1v12h-1zM594 119h1v8h-1zM595 121h3v6h-3zM598 119h2v10h-2zM600 121h1v6h-1zM601 119h1v8h-1zM602 121h2v6h-2zM604 119h2v8h-2zM606 119h1v6h-1zM607 117h1v10h-1zM608 119h1v6h-1zM609 117h1v10h-1zM610 119h2v6h-2zM612 119h6v8h-6zM618 119h1v14h-1zM619 119h1v8h-1zM620 117h1v16h-1zM621 119h1v16h-1zM622 119h1v22h-1zM623 117h1v18h-1zM624 119h2v6h-2zM626 117h1v14h-1zM627 119h1v6h-1zM628 117h1v8h-1zM629 119h1v14h-1zM630 117h2v10h-2zM632 117h1v6h-1zM633 117h2v8h-2zM635 117h1v10h-1zM636 117h1v8h-1zM637 115h1v8h-1zM638 115h1v10h-1zM639 115h2v8h-2zM641 115h1v10h-1zM642 117h3v6h-3zM645 115h1v8h-1zM646 117h1v8h-1zM647 117h1v6h-1zM648 117h1v8h-1zM649 117h1v6h-1zM650 115h3v8h-3zM653 117h1v6h-1zM654 115h1v8h-1zM655 117h1v6h-1z"/>
<path d="M15 144.5H641" stroke="#00f400" stroke-width="1" stroke-dasharray="8 4 1 4" fill="none"/>
<path fill="#00ffff" d="M16 131h2v6h-2zM18 131h1v8h-1zM19 133h1v4h-1zM20 131h3v8h-3zM23 131h1v6h-1zM24 131h1v8h-1zM25 133h1v4h-1zM26 131h2v6h-2zM28 133h1v4h-1zM29 133h1v6h-1zM30 133h1v4h-1zM31 131h1v6h-1zM32 133h1v6h-1zM33 131h4v6h-4zM37 129h1v8h-1zM38 133h1v4h-1zM39 133h2v6h-2zM41 131h1v6h-1zM42 131h1v8h-1zM43 133h1v4h-1zM44 133h1v6h-1zM45 133h3v4h-3zM48 131h1v6h-1zM49 133h3v4h-3zM52 133h1v6h-1zM53 133h2v4h-2zM55 131h1v8h-1zM56 131h1v10h-1zM57 133h1v6h-1zM58 131h1v6h-1zM59 133h1v4h-1zM60 133h1v6h-1zM61 133h1v4h-1zM62 133h2v6h-2zM64 133h1v4h-1zM65 131h2v6h-2zM67 133h1v4h-1zM68 133h1v6h-1zM69 133h1v4h-1zM70 131h1v6h-1zM71 133h3v4h-3zM74 131h1v6h-1zM75 131h1v8h-1zM76 133h1v6h-1zM77 133h2v4h-2zM79 133h1v6h-1zM80 133h1v4h-1zM81 131h2v6h-2zM83 133h3v4h-3zM86 133h1v6h-1zM87 131h1v6h-1zM88 131h1v8h-1zM89 133h1v4h-1zM90 131h1v6h-1zM91 133h5v4h-5zM96 131h2v6h-2zM98 133h1v6h-1zM99 131h1v8h-1zM100 133h1v4h-1zM101 131h1v8h-1zM102 131h2v6h-2zM104 133h1v4h-1zM105 133h1v6h-1zM106 131h1v8h-1zM107 133h1v4h-1zM108 131h1v6h-1zM109 133h1v4h-1zM110 129h1v8h-1zM111 133h2v4h-2zM113 133h1v6h-1zM114 133h1v4h-1zM115 131h1v6h-1zM116 133h1v4h-1zM117 131h1v6h-1zM118 133h1v6h-1zM119 133h1v8h-1zM120 131h1v6h-1zM121 133h2v4h-2zM123 133h1v6h-1zM124 133h1v4h-1zM125 131h1v6h-1zM126 133h1v4h-1zM127 131h1v6h-1zM128 133h1v6h-1zM129 131h1v6h-1zM130 131h1v8h-1zM131 133h2v4h-2zM133 131h2v6h-2zM135 133h1v6h-1zM136 133h1v4h-1zM137 131h1v8h-1zM138 131h1v6h-1zM139 131h1v8h-1zM140 133h1v4h-1zM141 131h1v6h-1zM142 133h1v6h-1zM143 133h1v4h-1zM144 131h1v8h-1zM145 133h1v4h-1zM146 127h1v10h-1zM147 133h2v4h-2zM149 131h1v6h-1zM150 133h1v4h-1zM151 131h1v8h-1zM152 133h1v6h-1zM153 129h1v8h-1zM154 133h3v4h-3zM157 133h1v6h-1zM158 131h1v6h-1zM159 133h1v4h-1zM160 133h1v6h-1zM161 131h1v6h-1zM162 133h1v4h-1zM163 133h2v6h-2zM165 133h1v4h-1zM166 131h1v6h-1zM167 133h1v6h-1zM168 131h1v6h-1zM169 133h3v6h-3zM172 131h1v6h-1zM173 133h4v4h-4zM177 133h1v6h-1zM178 131h1v6h-1zM179 133h1v6h-1zM180 131h1v8h-1zM181 131h1v6h-1zM182 127h1v10h-1zM183 133h1v4h-1zM184 133h1v6h-1zM185 131h1v8h-1zM186 131h1v98h-1zM187 223h1v8h-1zM188 225h1v4h-1zM189 225h1v6h-1zM190 225h1v4h-1zM191 223h1v8h-1zM192 225h1v4h-1zM193 225h1v6h-1zM194 223h1v8h-1zM195 225h1v4h-1zM196 223h1v10h-1zM197 223h1v8h-1zM198 225h1v4h-1zM199 225h1v6h-1zM200 225h1v4h-1zM201 225h1v6h-1zM202 225h1v4h-1zM203 225h1v6h-1zM204 225h1v4h-1zM205 223h2v8h-2zM207 225h1v4h-1zM208 225h1v6h-1zM209 223h1v6h-1zM210 225h1v6h-1zM211 223h1v6h-1zM212 225h1v6h-1zM213 225h1v4h-1zM214 225h1v8h-1zM215 225h1v6h-1zM216 225h1v4h-1zM217 225h5v6h-5zM222 223h1v6h-1zM223 223h1v8h-1zM224 225h1v4h-1zM225 225h1v6h-1zM226 223h1v6h-1zM227 225h1v6h-1zM228 225h1v4h-1zM229 223h1v10h-1zM230 225h1v4h-1zM231 225h1v6h-1zM232 225h1v4h-1zM233 223h2v8h-2zM235 225h1v4h-1zM236 223h1v8h-1zM237 225h1v6h-1zM238 223h1v6h-1zM239 223h2v8h-2zM241 225h1v4h-1zM242 225h1v6h-1zM243 225h1v4h-1zM244 223h1v8h-1zM245 225h1v4h-1zM246 225h1v6h-1zM247 223h1v6h-1zM248 225h1v6h-1zM249 225h1v4h-1zM250 225h1v6h-1zM251 225h1v4h-1zM252 223h1v8h-1zM253 223h1v6h-1zM254 225h2v4h-2zM256 223h1v6h-1zM257 225h1v6h-1zM258 225h1v4h-1zM259 223h1v12h-1zM260 225h2v6h-2zM262 225h1v4h-1zM263 225h2v6h-2zM265 223h1v6h-1zM266 223h1v8h-1zM267 225h1v6h-1zM268 225h3v4h-3zM271 223h1v8h-1zM272 225h1v4h-1zM273 223h1v6h-1zM274 223h1v8h-1zM275 223h1v6h-1zM276 225h1v6h-1zM277 223h1v6h-1zM278 225h1v4h-1zM279 223h1v8h-1zM280 225h1v4h-1zM281 225h1v6h-1zM282 223h1v6h-1zM283 225h2v4h-2zM285 225h1v6h-1zM286 223h1v6h-1zM287 225h1v6h-1zM288 223h1v6h-1zM289 225h1v6h-1zM290 223h1v6h-1zM291 225h2v4h-2zM293 223h1v6h-1zM294 223h1v8h-1zM295 223h1v6h-1zM296 225h1v6h-1zM297 225h1v4h-1zM298 225h1v6h-1zM299 223h1v6h-1zM300 225h2v6h-2zM302 225h2v4h-2zM304 221h1v10h-1zM305 225h1v4h-1zM306 223h4v8h-4zM310 223h1v6h-1zM311 225h1v8h-1zM312 225h1v4h-1zM313 223h1v8h-1zM314 225h3v6h-3zM317 225h1v4h-1zM318 225h1v6h-1zM319 223h1v6h-1zM320 225h1v6h-1zM321 223h1v6h-1zM322 225h1v4h-1zM323 223h1v6h-1zM324 225h1v4h-1zM325 223h2v8h-2zM327 225h2v4h-2zM329 225h1v6h-1zM330 223h1v8h-1zM331 225h1v4h-1zM332 223h1v6h-1zM333 223h1v8h-1zM334 225h1v6h-1zM335 223h1v6h-1zM336 225h1v4h-1zM337 223h1v8h-1zM338 225h1v4h-1zM339 225h1v6h-1zM340 225h1v8h-1zM341 223h1v10h-1zM342 225h1v6h-1zM343 223h1v6h-1zM344 225h1v4h-1zM345 225h1v6h-1zM346 223h1v6h-1zM347 225h1v6h-1zM348 221h1v8h-1zM349 225h1v8h-1zM350 223h1v6h-1zM351 221h1v10h-1zM352 223h1v6h-1zM353 219h1v12h-1zM354 225h1v4h-1zM355 223h1v10h-1zM356 225h1v10h-1zM357 225h1v6h-1zM358 225h1v4h-1zM359 221h1v10h-1zM360 225h1v4h-1zM361 223h1v12h-1zM362 225h1v6h-1zM363 223h2v8h-2zM365 225h1v8h-1zM366 225h1v6h-1zM367 225h1v4h-1zM368 223h1v12h-1zM369 225h1v6h-1zM370 223h1v10h-1zM371 225h1v8h-1zM372 225h1v4h-1zM373 223h2v8h-2zM375 225h2v4h-2zM377 223h1v10h-1zM378 223h1v8h-1zM379 225h1v4h-1zM380 223h1v6h-1zM381 225h2v4h-2zM383 223h1v6h-1zM384 225h1v4h-1zM385 223h1v6h-1zM386 225h1v6h-1zM387 223h1v6h-1zM388 221h1v8h-1zM389 225h1v6h-1zM390 223h1v6h-1zM391 225h1v6h-1zM392 223h1v8h-1zM393 225h1v4h-1zM394 223h2v6h-2zM396 225h1v4h-1zM397 223h1v8h-1zM398 223h1v6h-1zM399 225h1v4h-1zM400 223h1v6h-1zM401 225h1v4h-1zM402 223h1v8h-1zM403 221h1v8h-1zM404 223h2v6h-2zM406 225h1v4h-1zM407 223h1v8h-1zM408 225h1v4h-1zM409 223h2v8h-2zM411 225h2v4h-2zM413 223h1v6h-1zM414 225h1v4h-1zM415 223h1v8h-1zM416 225h1v4h-1zM417 223h1v6h-1zM418 225h1v4h-1zM419 223h1v8h-1zM420 225h1v4h-1zM421 223h2v6h-2zM423 225h1v6h-1zM424 223h1v8h-1zM425 225h1v4h-1zM426 223h1v8h-1zM427 225h1v4h-1zM428 223h1v8h-1zM429 223h1v6h-1zM430 225h1v4h-1zM431 223h1v6h-1zM432 225h1v4h-1zM433 223h1v6h-1zM434 225h1v4h-1zM435 223h2v6h-2zM437 225h1v10h-1zM438 223h1v6h-1zM439 223h1v8h-1zM440 225h1v6h-1zM441 223h1v6h-1zM442 225h1v6h-1zM443 223h1v6h-1zM444 221h1v8h-1zM445 223h1v6h-1zM446 225h1v4h-1zM447 223h1v8h-1zM448 223h1v6h-1zM449 225h1v4h-1zM450 223h1v8h-1zM451 225h1v4h-1zM452 223h1v6h-1zM453 225h1v4h-1zM454 223h1v8h-1zM455 225h1v4h-1zM456 223h2v6h-2zM458 223h1v8h-1zM459 223h2v6h-2zM461 225h1v6h-1zM462 223h1v6h-1zM463 225h1v6h-1zM464 223h1v6h-1zM465 225h1v4h-1zM466 223h2v6h-2zM468 225h1v4h-1zM469 223h1v6h-1zM470 225h1v4h-1zM471 223h1v8h-1zM472 225h1v4h-1zM473 223h2v6h-2zM475 225h1v4h-1zM476 223h1v6h-1zM477 225h1v4h-1zM478 223h1v6h-1zM479 225h1v4h-1zM480 223h2v6h-2zM482 223h1v4h-1zM483 221h1v8h-1zM484 223h1v4h-1zM485 223h1v6h-1zM486 223h1v4h-1zM487 223h1v6h-1zM488 221h1v6h-1zM489 223h1v6h-1zM490 223h1v4h-1zM491 223h1v6h-1zM492 221h1v6h-1zM493 221h1v8h-1zM494 223h1v4h-1zM495 223h1v6h-1zM496 223h1v4h-1zM497 221h1v8h-1zM498 223h1v4h-1zM499 223h1v6h-1zM500 221h1v8h-1zM501 223h1v4h-1zM502 223h1v6h-1zM503 223h1v4h-1zM504 223h1v6h-1zM505 221h1v6h-1zM506 223h1v6h-1zM507 221h1v6h-1zM508 223h1v6h-1zM509 223h1v4h-1zM510 223h1v6h-1zM511 221h1v6h-1zM512 221h1v8h-1zM513 223h1v6h-1zM514 223h1v4h-1zM515 223h1v6h-1zM516 221h1v6h-1zM517 223h1v6h-1zM518 223h1v4h-1zM519 223h1v6h-1zM520 221h1v8h-1zM521 223h1v4h-1zM522 221h1v8h-1zM523 221h1v6h-1zM524 221h1v8h-1zM525 223h1v4h-1zM526 223h1v6h-1zM527 223h1v4h-1zM528 221h1v8h-1zM529 223h1v4h-1zM530 221h1v8h-1zM531 223h1v4h-1zM532 223h2v6h-2zM534 223h1v4h-1zM535 223h1v6h-1zM536 221h1v6h-1zM537 221h1v8h-1zM538 223h1v6h-1zM539 221h1v6h-1zM540 223h1v6h-1zM541 221h1v6h-1zM542 223h1v6h-1zM543 221h1v6h-1zM544 223h1v6h-1zM545 223h1v4h-1zM546 223h1v6h-1zM547 223h1v4h-1zM548 221h1v8h-1zM549 223h1v6h-1zM550 223h1v4h-1zM551 223h1v6h-1zM552 221h1v6h-1zM553 223h1v8h-1zM554 221h1v6h-1zM555 223h1v6h-1zM556 221h1v6h-1zM557 223h2v6h-2zM559 221h1v6h-1zM560 223h1v6h-1zM561 223h1v4h-1zM562 221h1v8h-1zM563 223h1v4h-1zM564 223h1v6h-1zM565 223h1v4h-1zM566 223h1v6h-1zM567 223h1v4h-1zM568 223h1v6h-1zM569 219h1v10h-1zM570 223h1v6h-1zM571 221h1v6h-1zM572 221h1v8h-1zM573 223h1v4h-1zM574 223h1v6h-1zM575 223h1v4h-1zM576 221h1v8h-1zM577 223h1v4h-1zM578 221h1v8h-1zM579 223h2v4h-2zM581 223h1v6h-1zM582 223h1v4h-1zM583 221h1v6h-1zM584 223h1v6h-1zM585 223h1v4h-1zM586 223h1v6h-1zM587 221h1v6h-1zM588 221h1v8h-1zM589 221h1v6h-1zM590 221h1v8h-1zM591 221h1v6h-1zM592 223h1v6h-1zM593 221h1v6h-1zM594 221h1v8h-1zM595 223h1v4h-1zM596 223h1v6h-1zM597 223h1v4h-1zM598 223h1v6h-1zM599 223h1v4h-1zM600 223h1v6h-1zM601 221h1v6h-1zM602 223h1v6h-1zM603 221h1v6h-1zM604 223h1v6h-1zM605 221h2v6h-2zM607 223h1v6h-1zM608 221h1v8h-1zM609 223h3v4h-3zM612 223h1v6h-1zM613 221h1v8h-1zM614 223h1v4h-1zM615 223h1v6h-1zM616 221h1v10h-1zM617 223h1v6h-1zM618 217h1v12h-1zM619 223h1v6h-1zM620 217h1v10h-1zM621 223h1v6h-1zM622 221h1v10h-1zM623 223h1v8h-1zM624 221h1v12h-1zM625 223h1v8h-1zM626 221h1v8h-1zM627 223h1v6h-1zM628 221h1v10h-1zM629 219h1v10h-1zM630 217h1v10h-1zM631 223h1v4h-1zM632 221h1v6h-1zM633 223h3v4h-3zM636 223h2v6h-2zM638 223h2v4h-2zM640 223h2v6h-2zM642 221h1v8h-1zM643 221h1v6h-1zM644 223h1v6h-1zM645 221h1v6h-1zM646 223h1v4h-1zM647 221h1v8h-1zM648 223h2v6h-2zM650 221h1v6h-1zM651 223h1v4h-1zM652 223h1v6h-1zM653 221h1v6h-1zM654 221h2v8h-2z"/>
<path fill="#ff2000" d="M16 153h1v8h-1zM17 155h1v6h-1zM18 155h2v8h-2zM20 155h1v6h-1zM21 153h2v8h-2zM23 155h2v6h-2zM25 153h5v8h-5zM30 155h1v6h-1zM31 153h1v8h-1zM32 155h1v6h-1zM33 153h1v8h-1zM34 155h1v6h-1zM35 153h1v10h-1zM36 153h1v6h-1zM37 153h3v8h-3zM40 153h2v6h-2zM42 153h1v8h-1zM43 153h3v6h-3zM46 153h2v8h-2zM48 153h2v6h-2zM50 151h2v10h-2zM52 153h1v6h-1zM53 151h1v8h-1zM54 153h1v6h-1zM55 151h2v8h-2zM57 153h1v6h-1zM58 151h1v8h-1zM59 153h1v4h-1zM60 151h1v8h-1zM61 153h1v6h-1zM62 151h1v8h-1zM63 153h1v6h-1zM64 151h1v8h-1zM65 153h1v6h-1zM66 151h1v6h-1zM67 153h1v6h-1zM68 151h2v8h-2zM70 151h1v6h-1zM71 151h1v8h-1zM72 151h1v4h-1zM73 151h1v6h-1zM74 151h1v8h-1zM75 149h1v10h-1zM76 151h2v6h-2zM78 151h1v4h-1zM79 151h1v6h-1zM80 151h1v4h-1zM81 151h2v6h-2zM83 149h1v8h-1zM84 151h1v8h-1zM85 151h1v6h-1zM86 149h2v6h-2zM88 151h2v4h-2zM90 149h1v8h-1zM91 151h1v4h-1zM92 149h1v6h-1zM93 151h1v6h-1zM94 149h1v6h-1zM95 151h1v4h-1zM96 149h1v10h-1zM97 151h1v4h-1zM98 149h1v6h-1zM99 151h1v4h-1zM100 149h2v6h-2zM102 149h2v4h-2zM104 149h1v8h-1zM105 149h1v4h-1zM106 149h2v6h-2zM108 149h2v4h-2zM110 149h1v6h-1zM111 149h1v4h-1zM112 147h1v8h-1zM113 149h3v4h-3zM116 149h1v6h-1zM117 149h4v4h-4zM121 149h1v6h-1zM122 147h1v6h-1zM123 149h1v4h-1zM124 147h2v6h-2zM126 149h1v4h-1zM127 147h1v6h-1zM128 149h1v4h-1zM129 147h2v6h-2zM131 147h1v8h-1zM132 147h1v4h-1zM133 147h4v6h-4zM137 145h1v8h-1zM138 145h1v6h-1zM139 147h2v6h-2zM141 147h3v4h-3zM144 147h1v6h-1zM145 147h7v4h-7zM152 145h1v6h-1zM153 147h1v4h-1zM154 145h2v6h-2zM156 147h1v4h-1zM157 145h1v8h-1zM158 145h2v6h-2zM160 147h1v6h-1zM161 145h2v6h-2zM163 147h1v4h-1zM164 145h1v6h-1zM165 145h1v4h-1zM166 145h1v6h-1zM167 145h1v4h-1zM168 145h1v6h-1zM169 145h1v4h-1zM170 145h2v6h-2zM172 143h1v8h-1zM173 145h1v6h-1zM174 145h4v4h-4zM178 145h1v6h-1zM179 145h9v4h-9zM188 143h1v8h-1zM189 145h1v4h-1zM190 143h1v6h-1zM191 145h1v6h-1zM192 143h1v6h-1zM193 145h1v4h-1zM194 143h1v6h-1zM195 145h1v4h-1zM196 139h1v10h-1zM197 141h1v8h-1zM198 143h1v4h-1zM199 143h1v6h-1zM200 143h1v4h-1zM201 143h2v6h-2zM203 143h1v4h-1zM204 143h1v6h-1zM205 143h1v4h-1zM206 141h2v6h-2zM208 143h1v4h-1zM209 143h1v6h-1zM210 143h2v4h-2zM212 143h1v6h-1zM213 143h2v4h-2zM215 141h1v6h-1zM216 139h1v8h-1zM217 143h1v6h-1zM218 141h1v8h-1zM219 141h1v6h-1zM220 143h4v4h-4zM224 141h1v6h-1zM225 143h1v4h-1zM226 141h1v6h-1zM227 143h1v4h-1zM228 139h1v8h-1zM229 143h1v4h-1zM230 141h1v6h-1zM231 141h1v4h-1zM232 141h1v6h-1zM233 141h1v4h-1zM234 141h7v6h-7zM241 141h3v4h-3zM244 139h1v6h-1zM245 141h3v4h-3zM248 139h1v8h-1zM249 141h5v4h-5zM254 139h1v8h-1zM255 141h1v4h-1zM256 141h1v6h-1zM257 139h1v6h-1zM258 141h1v4h-1zM259 139h1v6h-1zM260 141h1v4h-1zM261 139h1v6h-1zM262 141h1v4h-1zM263 139h1v6h-1zM264 137h1v8h-1zM265 139h1v4h-1zM266 139h1v6h-1zM267 139h1v4h-1zM268 139h2v6h-2zM270 139h5v4h-5zM275 137h1v10h-1zM276 137h1v6h-1zM277 139h1v6h-1zM278 139h3v4h-3zM281 137h3v6h-3zM284 139h1v6h-1zM285 139h2v4h-2zM287 137h1v8h-1zM288 139h3v4h-3zM291 137h1v6h-1zM292 139h1v4h-1zM293 139h1v6h-1zM294 137h2v6h-2zM296 139h1v6h-1zM297 137h1v6h-1zM298 135h1v8h-1zM299 137h1v4h-1zM300 137h1v6h-1zM301 137h1v4h-1zM302 137h1v6h-1zM303 137h1v4h-1zM304 137h1v6h-1zM305 137h1v4h-1zM306 137h1v6h-1zM307 137h1v4h-1zM308 137h2v6h-2zM310 135h1v6h-1zM311 137h1v6h-1zM312 137h1v4h-1zM313 137h3v6h-3zM316 135h1v8h-1zM317 137h1v6h-1zM318 137h3v4h-3zM321 135h1v6h-1zM322 137h2v4h-2zM324 135h1v8h-1zM325 137h1v4h-1zM326 135h1v6h-1zM327 137h1v4h-1zM328 135h1v6h-1zM329 137h1v4h-1zM330 135h1v6h-1zM331 133h2v8h-2zM333 133h1v6h-1zM334 133h1v8h-1zM335 135h1v4h-1zM336 131h1v10h-1zM337 135h1v6h-1zM338 135h1v4h-1zM339 133h1v8h-1zM340 135h1v6h-1zM341 135h1v4h-1zM342 135h1v6h-1zM343 135h5v4h-5zM348 135h2v6h-2zM350 135h4v4h-4zM354 133h3v6h-3zM357 135h2v4h-2zM359 133h1v8h-1zM360 133h1v6h-1zM361 135h1v4h-1zM362 133h1v6h-1zM363 135h1v4h-1zM364 133h2v6h-2zM366 131h1v8h-1zM367 133h1v6h-1zM368 133h1v4h-1zM369 133h1v6h-1zM370 133h1v4h-1zM371 133h1v6h-1zM372 133h1v4h-1zM373 131h1v8h-1zM374 131h1v6h-1zM375 133h1v6h-1zM376 133h1v4h-1zM377 133h1v6h-1zM378 133h4v4h-4zM382 131h1v6h-1zM383 133h1v4h-1zM384 131h1v6h-1zM385 133h2v4h-2zM387 133h2v6h-2zM389 133h1v4h-1zM390 133h1v6h-1zM391 131h1v8h-1zM392 133h1v6h-1zM393 131h1v8h-1zM394 133h1v4h-1zM395 131h3v6h-3zM398 133h1v4h-1zM399 131h1v6h-1zM400 131h1v4h-1zM401 131h1v6h-1zM402 131h1v4h-1zM403 131h2v6h-2zM405 131h4v4h-4zM409 127h1v8h-1zM410 129h1v8h-1zM411 131h2v4h-2zM413 129h1v6h-1zM414 131h1v4h-1zM415 129h1v6h-1zM416 131h4v4h-4zM420 129h2v6h-2zM422 131h2v4h-2zM424 129h1v6h-1zM425 131h1v4h-1zM426 129h2v6h-2zM428 131h1v4h-1zM429 129h1v8h-1zM430 131h1v4h-1zM431 129h1v8h-1zM432 129h1v6h-1zM433 129h1v4h-1zM434 129h1v6h-1zM435 129h1v4h-1zM436 129h1v6h-1zM437 129h1v4h-1zM438 129h1v6h-1zM439 129h1v4h-1zM440 129h1v6h-1zM441 129h7v4h-7zM448 129h1v6h-1zM449 129h1v4h-1zM450 127h1v6h-1zM451 129h3v4h-3zM454 127h2v6h-2zM456 129h1v4h-1zM457 127h1v6h-1zM458 129h1v4h-1zM459 127h2v6h-2zM461 129h1v4h-1zM462 127h1v6h-1zM463 129h1v4h-1zM464 127h2v6h-2zM466 127h1v4h-1zM467 123h1v10h-1zM468 127h1v6h-1zM469 127h1v4h-1zM470 127h1v6h-1zM471 127h2v4h-2zM473 125h1v6h-1zM474 127h1v6h-1zM475 127h3v4h-3zM478 127h1v6h-1zM479 127h3v4h-3zM482 125h1v6h-1zM483 127h2v4h-2zM485 125h2v6h-2zM487 127h1v4h-1zM488 125h2v6h-2zM490 127h1v4h-1zM491 125h1v6h-1zM492 127h1v4h-1zM493 125h1v6h-1zM494 127h1v4h-1zM495 125h1v6h-1zM496 125h1v4h-1zM497 125h1v6h-1zM498 125h2v4h-2zM500 125h1v6h-1zM501 123h1v6h-1zM502 125h1v4h-1zM503 125h1v6h-1zM504 125h2v4h-2zM506 123h2v6h-2zM508 125h1v4h-1zM509 123h2v8h-2zM511 123h1v6h-1zM512 125h1v4h-1zM513 125h1v6h-1zM514 123h3v6h-3zM517 125h1v4h-1zM518 123h1v8h-1zM519 125h1v6h-1zM520 123h1v6h-1zM521 125h2v4h-2zM523 123h1v6h-1zM524 123h2v4h-2zM526 121h1v8h-1zM527 123h5v4h-5zM532 123h1v6h-1zM533 121h1v6h-1zM534 123h2v4h-2zM536 121h1v6h-1zM537 123h6v4h-6zM543 121h1v10h-1zM544 123h1v4h-1zM545 121h3v6h-3zM548 123h1v4h-1zM549 121h1v8h-1zM550 123h1v6h-1zM551 121h1v4h-1zM552 121h1v6h-1zM553 121h1v4h-1zM554 121h2v6h-2zM556 121h1v8h-1zM557 121h2v6h-2zM559 121h1v4h-1zM560 121h1v8h-1zM561 119h2v6h-2zM563 121h1v6h-1zM564 121h1v4h-1zM565 119h1v6h-1zM566 121h2v4h-2zM568 121h1v6h-1zM569 119h1v8h-1zM570 119h1v6h-1zM571 121h1v4h-1zM572 119h1v6h-1zM573 121h1v4h-1zM574 119h1v6h-1zM575 121h1v4h-1zM576 119h1v6h-1zM577 121h1v4h-1zM578 119h1v6h-1zM579 117h1v8h-1zM580 117h1v6h-1zM581 117h1v8h-1zM582 117h1v6h-1zM583 119h1v6h-1zM584 119h1v4h-1zM585 119h1v6h-1zM586 119h1v4h-1zM587 119h1v8h-1zM588 119h2v4h-2zM590 119h1v6h-1zM591 119h2v4h-2zM593 115h1v8h-1zM594 117h3v6h-3zM597 119h1v6h-1zM598 119h3v4h-3zM601 117h1v8h-1zM602 119h1v4h-1zM603 117h3v6h-3zM606 115h1v6h-1zM607 117h1v6h-1zM608 117h1v4h-1zM609 117h1v6h-1zM610 115h1v6h-1zM611 117h1v6h-1zM612 117h3v4h-3zM615 115h2v8h-2zM617 115h1v6h-1zM618 117h1v4h-1zM619 117h1v6h-1zM620 117h2v4h-2zM622 115h1v6h-1zM623 117h1v4h-1zM624 111h1v10h-1zM625 117h1v4h-1zM626 113h1v8h-1zM627 115h2v6h-2zM629 117h1v4h-1zM630 115h1v6h-1zM631 115h1v8h-1zM632 113h1v6h-1zM633 115h1v6h-1zM634 113h1v8h-1zM635 115h1v6h-1zM636 113h1v6h-1zM637 115h1v4h-1zM638 115h2v6h-2zM640 115h1v4h-1zM641 113h1v6h-1zM642 115h2v4h-2zM644 113h1v6h-1zM645 115h2v4h-2zM647 113h1v8h-1zM648 115h1v4h-1zM649 113h1v6h-1zM650 115h1v4h-1zM651 113h1v6h-1zM652 115h3v4h-3zM655 113h1v6h-1z"/>
<path fill="#00ff00" d="M16 143h1v8h-1zM17 145h2v6h-2zM19 143h1v8h-1zM20 145h1v8h-1zM21 143h1v8h-1zM22 145h1v8h-1zM23 145h1v6h-1zM24 143h1v8h-1zM25 145h1v6h-1zM26 145h1v8h-1zM27 143h1v8h-1zM28 145h1v6h-1zM29 143h1v10h-1zM30 145h1v6h-1zM31 143h1v8h-1zM32 145h1v6h-1zM33 143h2v10h-2zM35 145h1v8h-1zM36 143h1v10h-1zM37 143h2v8h-2zM39 145h1v8h-1zM40 143h1v10h-1zM41 143h1v8h-1zM42 143h1v10h-1zM43 143h2v8h-2zM45 145h1v6h-1zM46 145h1v8h-1zM47 145h2v6h-2zM49 143h2v8h-2zM51 145h1v8h-1zM52 145h3v6h-3zM55 143h1v10h-1zM56 145h5v6h-5zM61 143h1v8h-1zM62 145h2v6h-2zM64 141h1v12h-1zM65 143h1v8h-1zM66 145h1v8h-1zM67 143h1v10h-1zM68 145h1v8h-1zM69 145h1v6h-1zM70 143h1v8h-1zM71 145h1v6h-1zM72 143h1v10h-1zM73 145h1v8h-1zM74 143h1v8h-1zM75 145h1v6h-1zM76 143h2v10h-2zM78 145h1v6h-1zM79 145h1v8h-1zM80 143h1v8h-1zM81 145h1v6h-1zM82 143h1v10h-1zM83 145h1v6h-1zM84 143h1v10h-1zM85 145h1v6h-1zM86 145h1v8h-1zM87 143h1v8h-1zM88 145h1v8h-1zM89 141h1v10h-1zM90 145h3v6h-3zM93 145h1v8h-1zM94 143h1v8h-1zM95 143h1v10h-1zM96 145h1v6h-1zM97 143h1v8h-1zM98 145h1v8h-1zM99 145h1v6h-1zM100 143h1v10h-1zM101 145h2v6h-2zM103 143h1v8h-1zM104 145h1v8h-1zM105 145h1v6h-1zM106 143h1v8h-1zM107 145h1v6h-1zM108 145h2v8h-2zM110 145h3v6h-3zM113 143h1v10h-1zM114 145h2v6h-2zM116 145h1v8h-1zM117 143h2v10h-2zM119 145h1v8h-1zM120 145h1v6h-1zM121 145h1v8h-1zM122 143h1v10h-1zM123 145h1v6h-1zM124 143h1v8h-1zM125 145h1v6h-1zM126 143h1v8h-1zM127 145h1v6h-1zM128 143h1v8h-1zM129 145h1v6h-1zM130 145h1v8h-1zM131 143h1v12h-1zM132 143h1v10h-1zM133 145h1v8h-1zM134 143h1v8h-1zM135 145h1v6h-1zM136 145h1v12h-1zM137 145h1v6h-1zM138 143h1v10h-1zM139 145h4v6h-4zM143 143h1v10h-1zM144 143h1v8h-1zM145 145h2v6h-2zM147 143h1v8h-1zM148 145h1v8h-1zM149 143h1v8h-1zM150 145h2v6h-2zM152 145h1v8h-1zM153 145h2v6h-2zM155 143h3v8h-3zM158 145h1v8h-1zM159 141h1v10h-1zM160 145h1v6h-1zM161 143h1v10h-1zM162 145h1v6h-1zM163 143h1v8h-1zM164 145h1v6h-1zM165 145h1v8h-1zM166 143h1v8h-1zM167 145h1v6h-1zM168 145h2v8h-2zM170 143h1v10h-1zM171 145h1v8h-1zM172 145h1v6h-1zM173 143h1v10h-1zM174 145h1v8h-1zM175 145h1v6h-1zM176 143h1v8h-1zM177 143h1v10h-1zM178 145h1v8h-1zM179 143h1v8h-1zM180 145h1v6h-1zM181 143h1v10h-1zM182 145h3v6h-3zM185 145h1v8h-1zM186 145h1v22h-1zM187 161h2v6h-2zM189 159h1v8h-1zM190 161h2v6h-2zM192 161h1v8h-1zM193 161h1v6h-1zM194 161h1v8h-1zM195 161h2v6h-2zM197 161h2v8h-2zM199 159h1v10h-1zM200 161h1v6h-1zM201 161h3v8h-3zM204 161h1v6h-1zM205 159h1v8h-1zM206 161h1v6h-1zM207 159h1v12h-1zM208 161h1v6h-1zM209 161h1v12h-1zM210 161h4v6h-4zM214 161h1v8h-1zM215 161h1v6h-1zM216 159h2v8h-2zM218 161h1v8h-1zM219 161h1v6h-1zM220 161h1v8h-1zM221 161h1v6h-1zM222 159h1v10h-1zM223 159h1v8h-1zM224 161h1v10h-1zM225 159h1v8h-1zM226 161h1v6h-1zM227 159h1v10h-1zM228 161h1v8h-1zM229 159h1v8h-1zM230 161h1v6h-1zM231 159h1v8h-1zM232 161h1v6h-1zM233 161h1v8h-1zM234 159h1v8h-1zM235 161h1v6h-1zM236 159h1v8h-1zM237 159h2v10h-2zM239 161h1v6h-1zM240 159h1v10h-1zM241 161h1v8h-1zM242 161h1v10h-1zM243 159h1v8h-1zM244 161h1v8h-1zM245 161h1v6h-1zM246 161h1v8h-1zM247 161h1v6h-1zM248 159h1v8h-1zM249 161h1v8h-1zM250 159h1v8h-1zM251 161h1v8h-1zM252 161h1v6h-1zM253 159h1v8h-1zM254 161h1v8h-1zM255 159h1v8h-1zM256 161h5v6h-5zM261 159h2v8h-2zM263 161h1v8h-1zM264 161h1v6h-1zM265 161h1v8h-1zM266 161h3v6h-3zM269 159h1v8h-1zM270 161h1v8h-1zM271 161h1v6h-1zM272 159h3v8h-3zM275 161h3v6h-3zM278 159h1v8h-1zM279 161h2v6h-2zM281 161h1v8h-1zM282 159h1v8h-1zM283 161h1v8h-1zM284 159h1v8h-1zM285 161h1v6h-1zM286 159h1v8h-1zM287 161h1v6h-1zM288 159h1v8h-1zM289 161h1v6h-1zM290 159h1v10h-1zM291 161h2v6h-2zM293 161h1v8h-1zM294 161h1v6h-1zM295 159h1v10h-1zM296 161h1v6h-1zM297 159h1v10h-1zM298 161h1v8h-1zM299 159h1v10h-1zM300 161h1v6h-1zM301 159h1v10h-1zM302 161h1v6h-1zM303 157h1v10h-1zM304 161h2v6h-2zM306 159h1v8h-1zM307 161h1v6h-1zM308 161h1v8h-1zM309 159h1v10h-1zM310 161h1v6h-1zM311 159h1v10h-1zM312 161h1v6h-1zM313 159h1v8h-1zM314 159h1v10h-1zM315 159h2v8h-2zM317 159h1v10h-1zM318 161h3v6h-3zM321 159h1v8h-1zM322 161h1v8h-1zM323 159h1v10h-1zM324 161h1v8h-1zM325 159h2v8h-2zM327 161h1v6h-1zM328 159h1v10h-1zM329 161h1v6h-1zM330 159h1v8h-1zM331 161h1v6h-1zM332 159h1v10h-1zM333 161h1v6h-1zM334 159h1v10h-1zM335 161h1v10h-1zM336 157h1v12h-1zM337 161h1v6h-1zM338 159h1v10h-1zM339 157h1v12h-1zM340 159h1v8h-1zM341 161h1v6h-1zM342 159h1v10h-1zM343 161h1v6h-1zM344 161h1v8h-1zM345 157h1v10h-1zM346 161h1v10h-1zM347 161h1v6h-1zM348 161h1v8h-1zM349 159h1v12h-1zM350 157h1v12h-1zM351 159h1v10h-1zM352 157h1v10h-1zM353 157h1v12h-1zM354 159h1v10h-1zM355 159h1v12h-1zM356 155h1v12h-1zM357 157h1v10h-1zM358 161h1v6h-1zM359 161h1v8h-1zM360 161h1v6h-1zM361 159h1v10h-1zM362 157h1v12h-1zM363 159h1v10h-1zM364 161h1v6h-1zM365 157h1v12h-1zM366 161h1v8h-1zM367 159h1v12h-1zM368 157h1v10h-1zM369 161h1v10h-1zM370 161h1v6h-1zM371 159h1v8h-1zM372 161h1v8h-1zM373 159h1v10h-1zM374 157h1v12h-1zM375 157h1v10h-1zM376 161h1v8h-1zM377 161h1v10h-1zM378 159h1v10h-1zM379 157h1v10h-1zM380 161h2v6h-2zM382 161h2v8h-2zM384 161h1v6h-1zM385 159h1v8h-1zM386 161h1v8h-1zM387 161h2v6h-2zM389 159h1v10h-1zM390 159h1v8h-1zM391 161h3v6h-3zM394 159h2v8h-2zM396 161h4v6h-4zM400 159h1v10h-1zM401 161h1v8h-1zM402 159h1v8h-1zM403 161h1v8h-1zM404 159h2v8h-2zM406 161h1v8h-1zM407 161h1v6h-1zM408 159h1v8h-1zM409 161h1v6h-1zM410 159h1v10h-1zM411 161h1v8h-1zM412 159h1v10h-1zM413 161h1v8h-1zM414 159h1v8h-1zM415 161h2v6h-2zM417 159h1v8h-1zM418 161h1v8h-1zM419 161h1v6h-1zM420 161h1v8h-1zM421 159h1v8h-1zM422 161h2v8h-2zM424 161h1v10h-1zM425 161h1v6h-1zM426 161h1v8h-1zM427 159h1v8h-1zM428 161h1v8h-1zM429 161h1v6h-1zM430 161h2v8h-2zM432 159h1v8h-1zM433 161h1v6h-1zM434 159h1v8h-1zM435 161h1v6h-1zM436 159h1v8h-1zM437 159h1v10h-1zM438 161h2v6h-2zM440 159h1v12h-1zM441 159h1v8h-1zM442 161h1v8h-1zM443 161h2v6h-2zM445 161h1v8h-1zM446 161h2v6h-2zM448 159h1v10h-1zM449 161h1v6h-1zM450 161h1v10h-1zM451 161h1v8h-1zM452 157h1v12h-1zM453 161h1v6h-1zM454 159h1v10h-1zM455 161h1v8h-1zM456 159h1v8h-1zM457 161h2v6h-2zM459 159h1v10h-1zM460 159h1v8h-1zM461 161h1v8h-1zM462 159h1v8h-1zM463 161h2v6h-2zM465 159h1v10h-1zM466 161h1v6h-1zM467 159h1v8h-1zM468 161h1v8h-1zM469 161h1v6h-1zM470 161h1v8h-1zM471 159h1v8h-1zM472 159h1v10h-1zM473 161h1v6h-1zM474 159h1v8h-1zM475 161h1v6h-1zM476 159h1v10h-1zM477 161h1v6h-1zM478 157h1v10h-1zM479 159h1v8h-1zM480 161h1v8h-1zM481 159h1v8h-1zM482 159h1v10h-1zM483 161h1v8h-1zM484 159h1v10h-1zM485 161h1v6h-1zM486 159h1v8h-1zM487 159h1v10h-1zM488 161h1v6h-1zM489 159h1v10h-1zM490 161h1v6h-1zM491 159h3v8h-3zM494 161h1v8h-1zM495 161h1v6h-1zM496 159h1v8h-1zM497 161h1v8h-1zM498 159h1v8h-1zM499 161h1v8h-1zM500 161h4v6h-4zM504 159h1v8h-1zM505 161h2v6h-2zM507 159h1v8h-1zM508 161h1v6h-1zM509 159h1v8h-1zM510 161h1v6h-1zM511 159h1v8h-1zM512 161h1v8h-1zM513 161h1v6h-1zM514 159h1v8h-1zM515 161h1v8h-1zM516 159h1v8h-1zM517 161h1v6h-1zM518 159h1v8h-1zM519 161h1v8h-1zM520 159h1v10h-1zM521 159h1v8h-1zM522 161h1v6h-1zM523 159h1v8h-1zM524 161h4v6h-4zM528 159h2v8h-2zM530 161h1v10h-1zM531 161h1v8h-1zM532 161h2v6h-2zM534 159h1v8h-1zM535 161h2v6h-2zM537 161h1v8h-1zM538 159h2v8h-2zM540 161h1v8h-1zM541 161h1v6h-1zM542 159h1v8h-1zM543 161h2v6h-2zM545 161h1v8h-1zM546 161h2v6h-2zM548 159h1v10h-1zM549 161h1v6h-1zM550 161h1v8h-1zM551 161h1v6h-1zM552 159h2v8h-2zM554 161h2v8h-2zM556 161h1v6h-1zM557 159h1v8h-1zM558 161h1v6h-1zM559 161h1v8h-1zM560 159h1v8h-1zM561 161h1v8h-1zM562 161h1v6h-1zM563 161h1v8h-1zM564 159h2v8h-2zM566 161h1v6h-1zM567 159h1v8h-1zM568 161h2v6h-2zM570 159h1v10h-1zM571 159h1v8h-1zM572 161h1v6h-1zM573 159h1v8h-1zM574 161h7v6h-7zM581 159h2v8h-2zM583 161h3v8h-3zM586 161h1v6h-1zM587 159h1v10h-1zM588 161h1v6h-1zM589 159h1v8h-1zM590 161h1v6h-1zM591 161h1v8h-1zM592 161h1v6h-1zM593 159h1v8h-1zM594 161h1v6h-1zM595 161h1v8h-1zM596 161h1v6h-1zM597 161h1v8h-1zM598 159h1v8h-1zM599 159h1v12h-1zM600 161h1v6h-1zM601 159h3v8h-3zM604 161h1v8h-1zM605 161h1v6h-1zM606 161h1v8h-1zM607 159h1v8h-1zM608 161h2v6h-2zM610 161h1v8h-1zM611 161h1v6h-1zM612 159h1v10h-1zM613 161h1v6h-1zM614 159h1v10h-1zM615 161h1v8h-1zM616 159h1v12h-1zM617 157h1v10h-1zM618 161h1v6h-1zM619 157h1v12h-1zM620 159h1v12h-1zM621 161h1v6h-1zM622 159h1v10h-1zM623 157h1v12h-1zM624 159h2v12h-2zM626 161h1v6h-1zM627 159h1v12h-1zM628 159h1v8h-1zM629 159h1v10h-1zM630 161h1v6h-1zM631 159h1v10h-1zM632 161h1v6h-1zM633 159h1v10h-1zM634 159h1v8h-1zM635 161h1v6h-1zM636 161h1v8h-1zM637 161h4v6h-4zM641 159h1v10h-1zM642 161h1v6h-1zM643 159h1v8h-1zM644 161h2v6h-2zM646 161h1v8h-1zM647 161h1v6h-1zM648 161h1v8h-1zM649 161h1v6h-1zM650 159h1v8h-1zM651 161h1v6h-1zM652 161h1v8h-1zM653 159h1v8h-1zM654 161h1v8h-1zM655 159h1v8h-1z"/>
<path fill="#000" d="M16 145h1v1h-1zM21 147h1v1h-1zM24 147h1v1h-1zM27 145h1v2h-1zM29 145h1v2h-1zM31 145h1v2h-1zM33 145h1v2h-1zM37 145h1v2h-1zM38 145h1v2h-1zM42 145h1v1h-1zM44 145h1v1h-1zM59 147h1v1h-1zM60 147h1v1h-1zM61 147h1v1h-1zM63 147h1v1h-1zM70 145h1v2h-1zM74 145h1v2h-1zM80 145h1v2h-1zM94 145h1v2h-1zM95 145h1v2h-1zM103 145h1v1h-1zM106 145h1v1h-1zM107 147h1v1h-1zM120 147h1v1h-1zM122 145h1v2h-1zM124 145h1v2h-1zM126 145h1v2h-1zM131 145h1v2h-1zM134 145h1v2h-1zM138 145h1v1h-1zM144 145h1v1h-1zM149 145h1v2h-1zM153 147h1v1h-1zM155 145h1v2h-1zM157 145h1v2h-1zM170 147h1v1h-1zM172 147h1v1h-1zM173 147h1v1h-1zM174 147h1v1h-1zM176 145h1v2h-1z"/>
<path fill="#ffff00" d="M643 144h1v-1h2v-1h2v-1h1v-1h2v-1h2v-1h1v-1h2v16h-2v-1h-1v-1h-2v-1h-2v-1h-1v-1h-2v-1h-2v-1h-1z"/>
<path fill="#e6e6e6" d="M15 28h640v1h-640zM15 28h1v421h-1zM15 448h640v1h-640z"/>
<rect x="656" y="0" width="1" height="480" fill="#c4c0c4"/>
<path fill="#4a7cf0" stroke="#a8d4f8" stroke-width="1" shape-rendering="auto" d="M300.5 28.5H369.5V42L367 44.5H341L335.5 51.5L330 44.5H303L300.5 42Z"/>
<path fill="#ff2000" d="M0 234h10l5 5v1l-8 8H0z"/>
<path fill="#00ff00" d="M0 232h9l6 6v1l-7 7H0z"/>
<rect x="115.5" y="3.5" width="22" height="20" fill="#000" stroke="#aaa6aa" stroke-width="1"/>
<rect x="140.5" y="3.5" width="22" height="20" fill="#000" stroke="#aaa6aa" stroke-width="1"/>
<rect x="165.5" y="3.5" width="22" height="20" fill="#000" stroke="#aaa6aa" stroke-width="1"/>
<path d="M116.30 9.82L116.64 9.30L116.99 8.76L117.33 8.23L117.68 7.72L118.02 7.28L118.37 6.91L118.72 6.63L119.06 6.46L119.41 6.40L119.75 6.46L120.09 6.63L120.44 6.92L120.78 7.29L121.13 7.74L121.47 8.24L121.82 8.77L122.16 9.31L122.51 9.83L122.86 10.31L123.20 10.72L123.55 11.05L123.89 11.27L124.23 11.39L124.58 11.38L124.92 11.27L125.27 11.04L125.61 10.71L125.96 10.29L126.30 9.81L126.65 9.29L127.00 8.75L127.34 8.22L127.69 7.72L128.03 7.27L128.38 6.90L128.72 6.62L129.06 6.46L129.41 6.40L129.75 6.46L130.10 6.64L130.44 6.92L130.79 7.29L131.13 7.74L131.48 8.25L131.82 8.78L132.17 9.32L132.51 9.84L132.86 10.32L133.21 10.73L133.55 11.05L133.90 11.28L134.24 11.39L134.59 11.38L134.93 11.26L135.28 11.03L135.62 10.70L135.97 10.29L136.31 9.81L136.66 9.28L137.00 8.74" fill="none" stroke="#ffff00" stroke-width="2.2" stroke-linecap="round" shape-rendering="auto"/>
<path d="M116.30 18.01L116.64 17.47L116.99 16.94L117.33 16.45L117.68 16.01L118.02 15.65L118.37 15.39L118.72 15.24L119.06 15.20L119.41 15.28L119.75 15.47L120.09 15.77L120.44 16.16L120.78 16.61L121.13 17.12L121.47 17.66L121.82 18.20L122.16 18.71L122.51 19.18L122.86 19.58L123.20 19.89L123.55 20.10L123.89 20.19L124.23 20.17L124.58 20.04L124.92 19.79L125.27 19.45L125.61 19.02L125.96 18.53L126.30 18.01L126.65 17.46L127.00 16.93L127.34 16.44L127.69 16.01L128.03 15.65L128.38 15.39L128.72 15.24L129.06 15.20L129.41 15.28L129.75 15.48L130.10 15.77L130.44 16.16L130.79 16.62L131.13 17.13L131.48 17.67L131.82 18.21L132.17 18.72L132.51 19.19L132.86 19.59L133.21 19.89L133.55 20.10L133.90 20.19L134.24 20.17L134.59 20.03L134.93 19.79L135.28 19.44L135.62 19.01L135.97 18.52L136.31 18.00L136.66 17.46L137.00 16.93" fill="none" stroke="#00ffff" stroke-width="2" stroke-linecap="round" shape-rendering="auto"/>
<path d="M144.3 20.2L158.6 5.7" stroke="#00ff00" stroke-width="2" stroke-linecap="round" shape-rendering="auto"/>
<filter id="bl" x="-20%" y="-20%" width="140%" height="140%"><feGaussianBlur stdDeviation="0.55"/></filter><g shape-rendering="auto" fill="#a0a0a0" filter="url(#bl)"><path opacity="0.55" d="M168 12h6l2-6h6l2 6v5h-3l-1 4h-11z"/><path opacity="0.5" d="M170 13h4l2-7h4l1 4-1 8h-2l-1 3h-7z"/><path opacity="0.5" d="M176 6h3v14h-3zM171 13h2v8h-2zM181 9h2v6h-2z"/></g>
<path d="M233 2.5H195q-3.5 0-3.5 3.5V20.5q0 3 2.5 3.8" fill="none" stroke="#3c3e3c" stroke-width="1" shape-rendering="auto"/>
<path d="M194.5 24.5H230q3.500 0 3.500-3.500V4" fill="none" stroke="#585a56" stroke-width="1" shape-rendering="auto"/>
<g fill="none" stroke="#ccffff" shape-rendering="auto"><path stroke="#3a5a5a" stroke-width="3.4" stroke-linejoin="round" d="M241.5 22H245.7L246.6 5.5H254.6L256 22H262"/><path stroke-width="2" stroke-linejoin="round" d="M241.5 22H245.7L246.6 5.5H254.6L256 22H262"/><path stroke-width="1" d="M243.5 17V23.5M248.5 3V8M250.5 3V8M252.5 3V8M254.5 3V8M258.5 18V23.5M260.5 18V23.5M262.5 18V23.5"/></g>
<g shape-rendering="auto" fill="#383a38"><path d="M289.8 14.5l2.2-2h13.5v4H304.5v2.3h-2.7v-2.3h-1.3v3.3h-2.7v-3.3h-1.3v3.3h-3.2v-3.3h-1.5z"/><ellipse cx="309" cy="14.5" rx="2.9" ry="4.4" fill="none" stroke="#383a38" stroke-width="2.8"/></g>
<g shape-rendering="crispEdges"><path d="M315.5 3.5H335.5V22.5H318.5L315.5 19.5Z" fill="#585a60" stroke="#c4e4ec" stroke-width="1" shape-rendering="auto"/><path d="M316.5 4.5H334.5V21.5H319L316.5 19Z" fill="none" stroke="#6a66d8" stroke-width="1" shape-rendering="auto"/><rect x="320" y="4" width="12" height="8" fill="#545652"/><path d="M319.5 4V12.5H332.5V4" fill="none" stroke="#d8d8ff" stroke-width="1"/><path d="M320.5 4V11.5" fill="none" stroke="#2000a8" stroke-width="1"/><rect x="321" y="15" width="11" height="7" fill="#545652"/><path d="M320.5 22V14.5H331.5V22" fill="none" stroke="#d8d8ff" stroke-width="1"/><rect x="326" y="16" width="5" height="6" fill="#c8f8f8"/><rect x="323" y="17" width="1" height="4" fill="#2000a8"/></g>
<g shape-rendering="crispEdges"><rect x="345" y="3" width="13" height="11" fill="#444644"/><rect x="347" y="5" width="9" height="8" fill="#5c5e5a"/><path d="M347 7h9v1h-9zM347 10h9v1h-9z" fill="#444644"/><rect x="341" y="13" width="21" height="10" rx="2" fill="#444644" shape-rendering="auto"/><rect x="344" y="16" width="15" height="5" fill="#585a56"/><rect x="345" y="17" width="13" height="3" fill="#444644"/></g>
<rect x="366" y="1" width="2" height="26" fill="#0c0c0c"/>
<rect x="393.5" y="3.5" width="113" height="21" fill="#000" stroke="#6c6ab4" stroke-width="1"/>
<rect x="394" y="4" width="112" height="1" fill="#6c6ab4"/>
<path d="M395.00 14.07L395.28 12.84L395.56 11.65L395.83 10.58L396.11 9.66L396.39 8.96L396.67 8.50L396.94 8.31L397.22 8.39L397.50 8.75L397.77 9.36L398.05 10.19L398.33 11.21L398.61 12.36L398.88 13.58L399.16 14.81L399.44 15.99L399.72 17.06L400.00 17.97L400.27 18.66L400.55 19.11L400.83 19.30L401.11 19.20L401.38 18.84L401.66 18.22L401.94 17.37L402.21 16.35L402.49 15.20L402.77 13.98L403.05 12.75L403.32 11.57L403.60 10.50L403.88 9.61L404.16 8.92L404.44 8.48L404.71 8.30L404.99 8.41L405.27 8.78L405.55 9.41L405.82 10.26L406.10 11.29L406.38 12.44L406.65 13.67L406.93 14.90L407.21 16.07L407.49 17.13L407.76 18.02L408.04 18.70L408.32 19.14L408.60 19.30L408.88 19.19L409.15 18.80L409.43 18.16L409.71 17.31L409.99 16.27L410.26 15.11L410.54 13.89L410.82 12.66L411.10 11.49L411.37 10.43L411.65 9.55L411.93 8.88L412.20 8.45L412.48 8.30L412.76 8.42L413.04 8.82L413.31 9.46L413.59 10.33L413.87 11.37L414.15 12.53L414.43 13.76L414.70 14.98L414.98 16.15L415.26 17.20L415.54 18.08L415.81 18.74L416.09 19.16L416.37 19.30L416.64 19.17L416.92 18.76L417.20 18.11L417.48 17.24L417.75 16.19L418.03 15.03L418.31 13.80L418.59 12.57L418.87 11.41L419.14 10.36L419.42 9.49L419.70 8.84L419.98 8.43L420.25 8.30L420.53 8.44L420.81 8.86L421.08 9.52L421.36 10.40L421.64 11.45L421.92 12.62L422.19 13.84L422.47 15.07L422.75 16.23L423.03 17.27L423.31 18.14L423.58 18.78L423.86 19.18L424.14 19.30L424.42 19.15L424.69 18.72L424.97 18.05L425.25 17.17L425.52 16.11L425.80 14.94L426.08 13.71L426.36 12.49L426.63 11.33L426.91 10.29L427.19 9.44L427.47 8.80L427.75 8.41L428.02 8.30L428.30 8.46L428.58 8.90L428.86 9.58L429.13 10.47L429.41 11.53L429.69 12.70L429.97 13.93L430.24 15.16L430.52 16.31L430.80 17.34L431.07 18.19L431.35 18.82L431.63 19.19L431.91 19.30L432.19 19.12L432.46 18.68L432.74 17.99L433.02 17.10L433.30 16.03L433.57 14.85L433.85 13.62L434.13 12.40L434.40 11.25L434.68 10.23L434.96 9.38L435.24 8.76L435.51 8.40L435.79 8.30L436.07 8.49L436.35 8.94L436.62 9.63L436.90 10.54L437.18 11.61L437.46 12.79L437.74 14.02L438.01 15.24L438.29 16.39L438.57 17.41L438.85 18.24L439.12 18.85L439.40 19.21L439.68 19.29L439.95 19.10L440.23 18.64L440.51 17.94L440.79 17.02L441.06 15.95L441.34 14.76L441.62 13.53L441.90 12.31L442.18 11.17L442.45 10.16L442.73 9.33L443.01 8.73L443.28 8.38L443.56 8.31L443.84 8.51L444.12 8.98L444.39 9.69L444.67 10.61L444.95 11.69L445.23 12.88L445.50 14.11L445.78 15.33L446.06 16.47L446.34 17.47L446.62 18.30L446.89 18.89L447.17 19.23L447.45 19.29L447.73 19.08L448.00 18.60L448.28 17.88L448.56 16.95L448.83 15.87L449.11 14.68L449.39 13.44L449.67 12.23L449.94 11.09L450.22 10.09L450.50 9.28L450.78 8.69L451.06 8.37L451.33 8.31L451.61 8.54L451.89 9.02L452.17 9.75L452.44 10.69L452.72 11.78L453.00 12.97L453.27 14.20L453.55 15.41L453.83 16.55L454.11 17.54L454.38 18.35L454.66 18.92L454.94 19.24L455.22 19.28L455.50 19.05L455.77 18.55L456.05 17.82L456.33 16.88L456.61 15.78L456.88 14.59L457.16 13.35L457.44 12.14L457.72 11.01L457.99 10.03L458.27 9.23L458.55 8.66L458.82 8.35L459.10 8.32L459.38 8.56L459.66 9.07L459.94 9.81L460.21 10.76L460.49 11.86L460.77 13.06L461.05 14.29L461.32 15.50L461.60 16.62L461.88 17.61L462.15 18.40L462.43 18.95L462.71 19.25L462.99 19.28L463.26 19.02L463.54 18.51L463.82 17.76L464.10 16.80L464.38 15.70L464.65 14.50L464.93 13.27L465.21 12.06L465.49 10.94L465.76 9.96L466.04 9.18L466.32 8.63L466.60 8.34L466.87 8.33L467.15 8.59L467.43 9.11L467.70 9.88L467.98 10.83L468.26 11.94L468.54 13.14L468.81 14.38L469.09 15.58L469.37 16.70L469.65 17.67L469.93 18.44L470.20 18.98L470.48 19.26L470.76 19.27L471.03 19.00L471.31 18.46L471.59 17.69L471.87 16.73L472.14 15.62L472.42 14.41L472.70 13.18L472.98 11.97L473.25 10.86L473.53 9.90L473.81 9.13L474.09 8.60L474.37 8.33L474.64 8.34L474.92 8.62L475.20 9.16L475.48 9.94L475.75 10.91L476.03 12.03L476.31 13.23L476.58 14.47L476.86 15.67L477.14 16.78L477.42 17.73L477.69 18.49L477.97 19.01L478.25 19.27L478.53 19.26L478.81 18.97L479.08 18.41L479.36 17.63L479.64 16.65L479.92 15.53L480.19 14.32L480.47 13.09L480.75 11.89L481.02 10.79L481.30 9.84L481.58 9.09L481.86 8.57L482.13 8.32L482.41 8.35L482.69 8.65L482.97 9.21L483.25 10.00L483.52 10.99L483.80 12.11L484.08 13.32L484.36 14.56L484.63 15.75L484.91 16.85L485.19 17.79L485.47 18.54L485.74 19.04L486.02 19.28L486.30 19.24L486.57 18.93L486.85 18.36L487.13 17.57L487.41 16.58L487.69 15.45L487.96 14.23L488.24 13.00L488.52 11.81L488.80 10.71L489.07 9.78L489.35 9.04L489.63 8.55L489.90 8.32L490.18 8.36L490.46 8.68L490.74 9.26L491.01 10.07L491.29 11.06L491.57 12.20L491.85 13.41L492.12 14.64L492.40 15.84L492.68 16.92L492.96 17.85L493.24 18.58L493.51 19.07L493.79 19.29L494.07 19.23L494.35 18.90L494.62 18.31L494.90 17.50L495.18 16.50L495.45 15.36L495.73 14.15L496.01 12.91L496.29 11.72L496.56 10.64L496.84 9.72L497.12 9.00L497.40 8.52L497.68 8.31L497.95 8.38L498.23 8.72L498.51 9.31L498.78 10.13L499.06 11.14L499.34 12.28L499.62 13.50L499.89 14.73L500.17 15.92L500.45 17.00L500.73 17.91L501.00 18.63L501.28 19.09L501.56 19.29L501.84 19.22L502.12 18.87L502.39 18.26L502.67 17.43L502.95 16.42L503.23 15.28L503.50 14.06L503.78 12.82L504.06 11.64L504.33 10.57L504.61 9.66L504.89 8.95L505.17 8.50L505.44 8.30L505.72 8.39L506.00 8.75" fill="none" stroke="#005050" stroke-width="1.2" shape-rendering="auto"/>
<rect x="405" y="4" width="90" height="19" fill="#000"/>
<path d="M407.50 17.55L407.71 18.39L407.93 19.08L408.14 19.60L408.36 19.95L408.57 20.09L408.78 20.04L409.00 19.80L409.21 19.37L409.42 18.76L409.64 17.99L409.85 17.09L410.06 16.08L410.28 14.99L410.49 13.86L410.71 12.72L410.92 11.60L411.13 10.54L411.35 9.57L411.56 8.71L411.77 8.00L411.99 7.45L412.20 7.09L412.42 6.91L412.63 6.94L412.84 7.16L413.06 7.57L413.27 8.16L413.49 8.90L413.70 9.79L413.91 10.79L414.13 11.87L414.34 12.99L414.55 14.13L414.77 15.26L414.98 16.33L415.19 17.31L415.41 18.19L415.62 18.92L415.84 19.49L416.05 19.88L416.26 20.07L416.48 20.08L416.69 19.88L416.90 19.49L417.12 18.93L417.33 18.20L417.55 17.33L417.76 16.35L417.97 15.28L418.19 14.15L418.40 13.01L418.62 11.88L418.83 10.81L419.04 9.81L419.26 8.92L419.47 8.17L419.68 7.58L419.90 7.16L420.11 6.94L420.32 6.91L420.54 7.08L420.75 7.45L420.97 7.99L421.18 8.70L421.39 9.55L421.61 10.52L421.82 11.58L422.04 12.70L422.25 13.84L422.46 14.97L422.68 16.06L422.89 17.07L423.10 17.97L423.32 18.74L423.53 19.36L423.75 19.79L423.96 20.04L424.17 20.09L424.39 19.95L424.60 19.61L424.81 19.09L425.03 18.40L425.24 17.57L425.45 16.61L425.67 15.56L425.88 14.45L426.10 13.31L426.31 12.17L426.52 11.08L426.74 10.05L426.95 9.14L427.17 8.35L427.38 7.71L427.59 7.25L427.81 6.98L428.02 6.90L428.23 7.02L428.45 7.33L428.66 7.83L428.88 8.50L429.09 9.32L429.30 10.26L429.52 11.30L429.73 12.41L429.94 13.55L430.16 14.68L430.37 15.79L430.58 16.82L430.80 17.75L431.01 18.56L431.23 19.21L431.44 19.70L431.65 20.00L431.87 20.10L432.08 20.01L432.30 19.72L432.51 19.24L432.72 18.59L432.94 17.79L433.15 16.87L433.36 15.84L433.58 14.74L433.79 13.60L434.00 12.46L434.22 11.35L434.43 10.31L434.65 9.36L434.86 8.54L435.07 7.86L435.29 7.35L435.50 7.03L435.71 6.90L435.93 6.97L436.14 7.24L436.36 7.69L436.57 8.31L436.78 9.10L437.00 10.01L437.21 11.03L437.43 12.12L437.64 13.25L437.85 14.39L438.07 15.51L438.28 16.56L438.49 17.52L438.71 18.37L438.92 19.06L439.13 19.59L439.35 19.94L439.56 20.09L439.78 20.05L439.99 19.81L440.20 19.38L440.42 18.78L440.63 18.01L440.85 17.12L441.06 16.11L441.27 15.02L441.49 13.89L441.70 12.75L441.91 11.63L442.13 10.57L442.34 9.59L442.56 8.73L442.77 8.02L442.98 7.47L443.20 7.10L443.41 6.92L443.62 6.93L443.84 7.15L444.05 7.55L444.26 8.14L444.48 8.88L444.69 9.76L444.91 10.76L445.12 11.83L445.33 12.96L445.55 14.10L445.76 15.23L445.98 16.30L446.19 17.29L446.40 18.16L446.62 18.90L446.83 19.47L447.04 19.87L447.26 20.07L447.47 20.08L447.69 19.89L447.90 19.51L448.11 18.95L448.33 18.22L448.54 17.36L448.75 16.38L448.97 15.31L449.18 14.19L449.39 13.05L449.61 11.92L449.82 10.84L450.04 9.83L450.25 8.94L450.46 8.19L450.68 7.59L450.89 7.17L451.11 6.94L451.32 6.91L451.53 7.08L451.75 7.43L451.96 7.97L452.17 8.68L452.39 9.52L452.60 10.49L452.81 11.55L453.03 12.67L453.24 13.81L453.46 14.94L453.67 16.03L453.88 17.04L454.10 17.95L454.31 18.72L454.52 19.34L454.74 19.78L454.95 20.04L455.17 20.10L455.38 19.96L455.59 19.62L455.81 19.11L456.02 18.42L456.24 17.59L456.45 16.64L456.66 15.59L456.88 14.48L457.09 13.34L457.30 12.20L457.52 11.11L457.73 10.08L457.94 9.16L458.16 8.37L458.37 7.73L458.59 7.26L458.80 6.98L459.01 6.90L459.23 7.01L459.44 7.32L459.65 7.82L459.87 8.48L460.08 9.29L460.30 10.23L460.51 11.27L460.72 12.38L460.94 13.51L461.15 14.65L461.37 15.75L461.58 16.79L461.79 17.73L462.01 18.54L462.22 19.20L462.43 19.69L462.65 19.99L462.86 20.10L463.07 20.01L463.29 19.73L463.50 19.26L463.72 18.62L463.93 17.82L464.14 16.89L464.36 15.87L464.57 14.77L464.78 13.63L465.00 12.49L465.21 11.38L465.43 10.34L465.64 9.39L465.85 8.56L466.07 7.88L466.28 7.37L466.50 7.04L466.71 6.90L466.92 6.97L467.14 7.23L467.35 7.67L467.56 8.29L467.78 9.07L467.99 9.98L468.20 11.00L468.42 12.09L468.63 13.22L468.85 14.36L469.06 15.48L469.27 16.53L469.49 17.50L469.70 18.34L469.92 19.04L470.13 19.58L470.34 19.93L470.56 20.09L470.77 20.05L470.98 19.82L471.20 19.40L471.41 18.80L471.62 18.04L471.84 17.14L472.05 16.14L472.27 15.06L472.48 13.93L472.69 12.79L472.91 11.67L473.12 10.60L473.33 9.62L473.55 8.76L473.76 8.04L473.98 7.48L474.19 7.10L474.40 6.92L474.62 6.93L474.83 7.14L475.05 7.54L475.26 8.12L475.47 8.86L475.69 9.74L475.90 10.73L476.11 11.80L476.33 12.93L476.54 14.07L476.75 15.19L476.97 16.27L477.18 17.26L477.40 18.14L477.61 18.88L477.82 19.46L478.04 19.86L478.25 20.07L478.47 20.08L478.68 19.90L478.89 19.52L479.11 18.97L479.32 18.25L479.53 17.38L479.75 16.41L479.96 15.34L480.18 14.22L480.39 13.08L480.60 11.95L480.82 10.87L481.03 9.86L481.24 8.97L481.46 8.21L481.67 7.61L481.88 7.18L482.10 6.95L482.31 6.91L482.53 7.07L482.74 7.42L482.95 7.95L483.17 8.65L483.38 9.50L483.60 10.46L483.81 11.52L484.02 12.63L484.24 13.77L484.45 14.91L484.66 16.00L484.88 17.01L485.09 17.92L485.31 18.70L485.52 19.33L485.73 19.77L485.95 20.03L486.16 20.10L486.37 19.96L486.59 19.64L486.80 19.13L487.01 18.45L487.23 17.62L487.44 16.67L487.66 15.62L487.87 14.51L488.08 13.37L488.30 12.24L488.51 11.14L488.73 10.11L488.94 9.19L489.15 8.39L489.37 7.75L489.58 7.27L489.79 6.99L490.01 6.90L490.22 7.01L490.44 7.31L490.65 7.80L490.86 8.46L491.08 9.27L491.29 10.20L491.50 11.24L491.72 12.34L491.93 13.48L492.14 14.62L492.36 15.72L492.57 16.76L492.79 17.70L493.00 18.52" fill="none" stroke="#00ffff" stroke-width="2.2" shape-rendering="auto"/>
<rect x="405.25" y="4.25" width="89" height="18.75" fill="none" stroke="#ff6000" stroke-width="2.5"/>
<rect x="521.5" y="3.5" width="21" height="21" fill="#000" stroke="#b0aab0" stroke-width="1"/>
<rect x="777" y="3" width="22" height="21" fill="#ff3000"/>
<path d="M781.5 6.5L794 20M794 6.5L781.5 20" stroke="#fff" stroke-width="2.6" shape-rendering="auto"/>
<g shape-rendering="auto" fill="none"><path d="M453 473H459.3L465.7 456.2H471.5" stroke="#6cb0ff" stroke-width="2.4" /><path d="M453.5 473H459L465.5 456.4H471" stroke="#e8f4ff" stroke-width="1"/></g>
</svg>
<!-- top bar -->
<div class="abs" id="logo" style="left:13.5px;top:3.5px;font-weight:bold;font-size:19px;line-height:22px;color:#ffff00;transform-origin:0 50%;transform:scaleX(1.28);text-shadow:0 0 1px #223;">Hantek</div>
<div class="abs" style="left:268px;top:0px;width:15px;text-align:center;font-weight:bold;font-size:24px;line-height:26px;color:#00ff00;">T</div>
<div class="abs" style="left:521.5px;top:3px;width:21px;text-align:center;font-size:19px;line-height:22px;color:#c4f6f6;-webkit-text-stroke:0.55px #c4f6f6;">W</div>
<div class="pill" style="left:547px;top:3px;width:99px;"></div>
<div class="val" style="left:548px;top:4px;width:99px;color:#fff;font-size:18.5px;">400us</div>
<div class="abs" style="left:300px;top:29.5px;width:71px;text-align:center;color:#fff;font-size:16.5px;line-height:16px;transform:scale(0.96,1.07);">0.000s</div>
<div class="abs" style="left:1.5px;top:232px;font-weight:bold;font-size:14px;line-height:14px;color:#3030ff;">4</div>
<!-- right panel -->
<div class="abs" style="left:678.5px;top:2px;color:#fff;font-size:21px;line-height:24px;letter-spacing:0px;">UTILITY</div>
<div class="btn" style="top:64px;height:42px;line-height:18px;padding-top:4px;">System<br>Status</div>
<div class="btn" style="top:145px;height:42px;line-height:18px;padding-top:4px;">Update<br>Firmware</div>
<div class="btn" style="top:221px;height:42px;line-height:18px;padding-top:4px;">Save<br>Waveform</div>
<div class="btn" style="top:305px;height:42px;line-height:42px;">Do Self Cal</div>
<div class="btn" style="left:678px;width:100px;top:448px;height:25px;line-height:23px;">Page 1/4</div>
<!-- bottom bar -->
<div class="lbl y" style="left:14.3px;top:453.5px;">CH1</div>
<div class="pill" style="left:48px;top:453px;width:62px;"></div><div class="val y" style="left:48px;top:456.5px;width:62px;">1.00V</div>
<div class="lbl c" style="left:115px;top:453.5px;">CH2</div>
<div class="pill" style="left:148px;top:453px;width:62px;"></div><div class="val c" style="left:148px;top:456.5px;width:62px;">1.00V</div>
<div class="lbl r" style="left:215px;top:453.5px;">CH3</div>
<div class="pill" style="left:248px;top:453px;width:62px;"></div><div class="val r" style="left:248px;top:456.5px;width:62px;">1.00V</div>
<div class="lbl gn" style="left:315px;top:453.5px;">CH4</div>
<div class="pill" style="left:348px;top:453px;width:62px;"></div><div class="val gn" style="left:348px;top:456.5px;width:62px;">1.00V</div>
<div class="lbl y" style="left:417px;top:453.5px;">CH1</div>
<div class="pill" style="left:473px;top:453px;width:70px;"></div><div class="val y" style="left:473px;top:454px;width:70px;">1.88V</div>
<div class="pill" style="left:550px;top:453px;width:100px;"></div><div class="val y" style="left:551px;top:454px;width:100px;">10.0000Hz</div>
</body></html>
